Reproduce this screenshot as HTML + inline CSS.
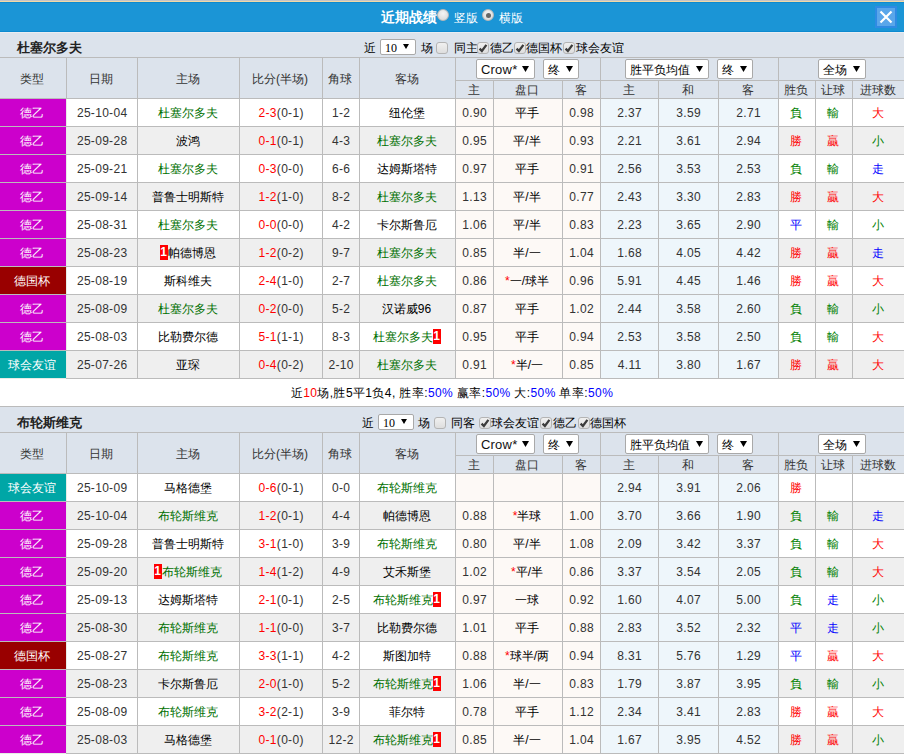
<!DOCTYPE html>
<html><head><meta charset="utf-8"><style>
html,body{margin:0;padding:0;background:#fff;width:904px;height:755px;overflow:hidden;position:relative}
body{font-family:"Liberation Sans",sans-serif;font-size:12px;color:#222}
body>div{position:absolute;box-sizing:border-box}
svg{display:block}
.c{text-align:center;white-space:nowrap;overflow:hidden}
.t{white-space:nowrap;line-height:12px}
.hd{color:#333}
.ttl{font-weight:bold;font-size:13px;color:#333}
.title{color:#fff;font-size:12px;white-space:nowrap}
.title b{font-size:14px}
.rd{display:inline-block;width:12px;height:12px;border-radius:50%;background:linear-gradient(#f4f4f4,#d8d8d8);border:1px solid #b8b8b8;box-sizing:border-box;vertical-align:6px;position:relative}
.rd.on::after{content:"";position:absolute;left:2.5px;top:2.5px;width:5px;height:5px;border-radius:50%;background:#555}
.ctrl{height:24px;line-height:24px;white-space:nowrap}
.cb{display:inline-block;width:11px;height:11px;border:1px solid #a8a8a8;border-radius:2px;background:linear-gradient(#f2f2f2,#dcdcdc);box-sizing:border-box;vertical-align:-1px;position:relative}
.cb svg{position:absolute;left:-1px;top:-1px}
.s10{display:inline-block;width:36px;height:16px;line-height:14px;border:1px solid #a9a9a9;border-radius:2px;background:#fff;box-sizing:border-box;vertical-align:-3px;position:relative;padding-left:5px;color:#000;font-family:'Liberation Mono',monospace;font-size:11px}
.arr,.arr2{position:absolute}
.arr2{left:22px;top:4px}
.st{position:absolute;left:5px;top:0;line-height:19px}
.arr{right:6px;top:6px}
.rc{display:inline-block;background:#f00;color:#fff;width:8px;height:15px;line-height:15px;text-align:center;vertical-align:-3px;position:relative;top:-4px;letter-spacing:0;text-indent:0;font-weight:bold}
</style></head><body>
<div style="left:0px;top:0px;width:904px;height:1px;background:#c4c4c8"></div>
<div style="left:0px;top:1px;width:904px;height:1px;background:#f2d9a6"></div>
<div style="left:0px;top:2px;width:904px;height:1px;background:#0d8ad0"></div>
<div style="left:0px;top:3px;width:904px;height:28px;background:#1b95d6"></div>
<div style="left:0px;top:31px;width:904px;height:1px;background:#0d8ad0"></div>
<div style="left:0px;top:32px;width:904px;height:1px;background:#e9edf2"></div>
<div class="t" style="left:381px;top:11px;font-weight:bold;font-size:14px;color:#fff">近期战绩</div>
<div style="left:437px;top:9px;width:12px;height:12px;border-radius:50%;border:1px solid #b9b9b9;background:radial-gradient(circle at 50% 35%,#f4f4f4,#d4d4d4)"></div>
<div class="t" style="left:454px;top:12px;color:#fff">竖版</div>
<div style="left:482px;top:9px;width:12px;height:12px;border-radius:50%;border:1px solid #b9b9b9;background:radial-gradient(circle at 50% 35%,#f4f4f4,#d4d4d4)"><div style="position:absolute;left:2.5px;top:2.5px;width:5px;height:5px;border-radius:50%;background:#666"></div></div>
<div class="t" style="left:499px;top:12px;color:#fff">横版</div>
<div style="left:875px;top:6px;width:22px;height:22px;background:#2f8be3"></div>
<div style="left:877px;top:8px;width:18px;height:18px;background:#5aa6ea"><svg width="18" height="18" viewBox="0 0 18 18"><path d="M3.5 3.5 L14.5 14.5 M14.5 3.5 L3.5 14.5" stroke="#fff" stroke-width="2.2"/></svg></div>
<div style="left:0px;top:33px;width:904px;height:24px;background:#dce3ec"></div>
<div class="t" style="left:17px;top:42px;font-weight:bold;font-size:13px">杜塞尔多夫</div>
<div class="t" style="left:364px;top:42px;color:#000">近</div>
<div style="left:380px;top:39px;width:36px;height:16px;background:#fff;border:1px solid #a9a9a9;border-radius:2px;"></div>
<div class="t" style="left:385px;top:42px;font-family:'Liberation Serif',serif;font-size:12px;line-height:12px;color:#000">10</div>
<div style="left:403px;top:44px;width:6px;height:5px;"><svg width="6" height="5" viewBox="0 0 6 5"><path d="M0 0 H6 L3 5 Z" fill="#000"/></svg></div>
<div class="t" style="left:421px;top:42px;color:#000">场</div>
<div style="left:436px;top:42px;width:12px;height:12px;border:1px solid #b4b4b4;border-radius:3px;background:linear-gradient(#f0f0f0,#dedede)"></div>
<div class="t" style="left:454px;top:42px;color:#000">同主</div>
<div style="left:477px;top:42px;width:12px;height:12px;border:1px solid #b4b4b4;border-radius:3px;background:linear-gradient(#f0f0f0,#dedede)"><svg width="12" height="12" viewBox="0 0 12 12" style="position:absolute;left:-1px;top:-1px"><path d="M2.6 6.6 L4.9 9 L9.4 2.9" stroke="#3c3c3c" stroke-width="2.3" fill="none"/></svg></div>
<div class="t" style="left:490px;top:42px;color:#000">德乙</div>
<div style="left:514px;top:42px;width:12px;height:12px;border:1px solid #b4b4b4;border-radius:3px;background:linear-gradient(#f0f0f0,#dedede)"><svg width="12" height="12" viewBox="0 0 12 12" style="position:absolute;left:-1px;top:-1px"><path d="M2.6 6.6 L4.9 9 L9.4 2.9" stroke="#3c3c3c" stroke-width="2.3" fill="none"/></svg></div>
<div class="t" style="left:526px;top:42px;color:#000">德国杯</div>
<div style="left:563px;top:42px;width:12px;height:12px;border:1px solid #b4b4b4;border-radius:3px;background:linear-gradient(#f0f0f0,#dedede)"><svg width="12" height="12" viewBox="0 0 12 12" style="position:absolute;left:-1px;top:-1px"><path d="M2.6 6.6 L4.9 9 L9.4 2.9" stroke="#3c3c3c" stroke-width="2.3" fill="none"/></svg></div>
<div class="t" style="left:576px;top:42px;color:#000">球会友谊</div>
<div style="left:0px;top:57px;width:904px;height:1px;background:#bbbbbb"></div>
<div style="left:0px;top:58px;width:904px;height:40px;background:#dce3ec"></div>
<div style="left:66px;top:57px;width:1px;height:41px;background:#bbbbbb"></div>
<div style="left:137px;top:57px;width:1px;height:41px;background:#bbbbbb"></div>
<div style="left:239px;top:57px;width:1px;height:41px;background:#bbbbbb"></div>
<div style="left:322px;top:57px;width:1px;height:41px;background:#bbbbbb"></div>
<div style="left:359px;top:57px;width:1px;height:41px;background:#bbbbbb"></div>
<div style="left:455px;top:57px;width:1px;height:41px;background:#bbbbbb"></div>
<div style="left:493px;top:80px;width:1px;height:18px;background:#bbbbbb"></div>
<div style="left:562px;top:80px;width:1px;height:18px;background:#bbbbbb"></div>
<div style="left:600px;top:57px;width:1px;height:41px;background:#bbbbbb"></div>
<div style="left:658px;top:80px;width:1px;height:18px;background:#bbbbbb"></div>
<div style="left:718px;top:80px;width:1px;height:18px;background:#bbbbbb"></div>
<div style="left:778px;top:57px;width:1px;height:41px;background:#bbbbbb"></div>
<div style="left:815px;top:80px;width:1px;height:18px;background:#bbbbbb"></div>
<div style="left:852px;top:80px;width:1px;height:18px;background:#bbbbbb"></div>
<div style="left:455px;top:80px;width:449px;height:1px;background:#bbbbbb"></div>
<div style="left:0px;top:98px;width:904px;height:1px;background:#bbbbbb"></div>
<div class="c" style="left:-1px;top:59px;width:66px;height:40px;line-height:40px;color:#000;color:#333">类型</div>
<div class="c" style="left:66px;top:59px;width:70px;height:40px;line-height:40px;color:#000;color:#333">日期</div>
<div class="c" style="left:137px;top:59px;width:101px;height:40px;line-height:40px;color:#000;color:#333">主场</div>
<div class="c" style="left:239px;top:59px;width:82px;height:40px;line-height:40px;color:#000;color:#333">比分(半场)</div>
<div class="c" style="left:322px;top:59px;width:36px;height:40px;line-height:40px;color:#000;color:#333">角球</div>
<div class="c" style="left:359px;top:59px;width:95px;height:40px;line-height:40px;color:#000;color:#333">客场</div>
<div class="c" style="left:455px;top:82px;width:37px;height:17px;line-height:17px;color:#000;color:#333">主</div>
<div class="c" style="left:493px;top:82px;width:68px;height:17px;line-height:17px;color:#000;color:#333">盘口</div>
<div class="c" style="left:562px;top:82px;width:37px;height:17px;line-height:17px;color:#000;color:#333">客</div>
<div class="c" style="left:600px;top:82px;width:57px;height:17px;line-height:17px;color:#000;color:#333">主</div>
<div class="c" style="left:658px;top:82px;width:59px;height:17px;line-height:17px;color:#000;color:#333">和</div>
<div class="c" style="left:718px;top:82px;width:59px;height:17px;line-height:17px;color:#000;color:#333">客</div>
<div class="c" style="left:778px;top:82px;width:36px;height:17px;line-height:17px;color:#000;color:#333">胜负</div>
<div class="c" style="left:815px;top:82px;width:36px;height:17px;line-height:17px;color:#000;color:#333">让球</div>
<div class="c" style="left:852px;top:82px;width:52px;height:17px;line-height:17px;color:#000;color:#333">进球数</div>
<div style="left:476px;top:59px;width:59px;height:20px;background:#fff;border:1px solid #a9a9a9;border-radius:2px;"></div>
<div class="t" style="left:481px;top:64px;font-size:13px;letter-spacing:0.2px;color:#111">Crow*</div>
<div style="left:522px;top:66px;width:7px;height:6px;"><svg width="7" height="6" viewBox="0 0 7 6"><path d="M0 0 H7 L3.5 6 Z" fill="#000"/></svg></div>
<div style="left:543px;top:59px;width:36px;height:20px;background:#fff;border:1px solid #a9a9a9;border-radius:2px;"></div>
<div class="t" style="left:548px;top:64px;color:#000">终</div>
<div style="left:566px;top:66px;width:7px;height:6px;"><svg width="7" height="6" viewBox="0 0 7 6"><path d="M0 0 H7 L3.5 6 Z" fill="#000"/></svg></div>
<div style="left:625px;top:59px;width:84px;height:20px;background:#fff;border:1px solid #a9a9a9;border-radius:2px;"></div>
<div class="t" style="left:630px;top:64px;color:#000">胜平负均值</div>
<div style="left:696px;top:66px;width:7px;height:6px;"><svg width="7" height="6" viewBox="0 0 7 6"><path d="M0 0 H7 L3.5 6 Z" fill="#000"/></svg></div>
<div style="left:717px;top:59px;width:36px;height:20px;background:#fff;border:1px solid #a9a9a9;border-radius:2px;"></div>
<div class="t" style="left:722px;top:64px;color:#000">终</div>
<div style="left:740px;top:66px;width:7px;height:6px;"><svg width="7" height="6" viewBox="0 0 7 6"><path d="M0 0 H7 L3.5 6 Z" fill="#000"/></svg></div>
<div style="left:818px;top:59px;width:48px;height:20px;background:#fff;border:1px solid #a9a9a9;border-radius:2px;"></div>
<div class="t" style="left:823px;top:64px;color:#000">全场</div>
<div style="left:853px;top:66px;width:7px;height:6px;"><svg width="7" height="6" viewBox="0 0 7 6"><path d="M0 0 H7 L3.5 6 Z" fill="#000"/></svg></div>
<div style="left:0px;top:99px;width:66px;height:27px;background:#cc00cc"></div>
<div class="c" style="left:-1px;top:100px;width:66px;height:27px;line-height:27px;color:#000;color:#fff">德乙</div>
<div style="left:67px;top:99px;width:70px;height:27px;background:#ffffff"></div>
<div class="c" style="left:67px;top:100px;width:70px;height:27px;line-height:27px;letter-spacing:0.3px;text-indent:0.3px;color:#333;">25-10-04</div>
<div style="left:66px;top:99px;width:1px;height:27px;background:#e6ede6"></div>
<div style="left:138px;top:99px;width:101px;height:27px;background:#ffffff"></div>
<div class="c" style="left:137px;top:100px;width:101px;height:27px;line-height:27px;color:#000;"><span style="color:#007000">杜塞尔多夫</span></div>
<div style="left:137px;top:98px;width:1px;height:28px;background:#bbbbbb"></div>
<div style="left:240px;top:99px;width:82px;height:27px;background:#ffffff"></div>
<div class="c" style="left:240px;top:100px;width:82px;height:27px;line-height:27px;letter-spacing:0.3px;text-indent:0.3px;color:#333;"><span style="color:#ff0000">2-3</span>(0-1)</div>
<div style="left:239px;top:98px;width:1px;height:28px;background:#bbbbbb"></div>
<div style="left:323px;top:99px;width:36px;height:27px;background:#ffffff"></div>
<div class="c" style="left:323px;top:100px;width:36px;height:27px;line-height:27px;letter-spacing:0.3px;text-indent:0.3px;color:#333;">1-2</div>
<div style="left:322px;top:98px;width:1px;height:28px;background:#bbbbbb"></div>
<div style="left:360px;top:99px;width:95px;height:27px;background:#ffffff"></div>
<div class="c" style="left:359px;top:100px;width:95px;height:27px;line-height:27px;color:#000;">纽伦堡</div>
<div style="left:359px;top:98px;width:1px;height:28px;background:#bbbbbb"></div>
<div style="left:456px;top:99px;width:37px;height:27px;background:#fdf9f6"></div>
<div class="c" style="left:456px;top:100px;width:37px;height:27px;line-height:27px;letter-spacing:0.3px;text-indent:0.3px;color:#333;">0.90</div>
<div style="left:455px;top:98px;width:1px;height:28px;background:#bbbbbb"></div>
<div style="left:494px;top:99px;width:68px;height:27px;background:#fdf9f6"></div>
<div class="c" style="left:493px;top:100px;width:68px;height:27px;line-height:27px;color:#000;">平手</div>
<div style="left:493px;top:98px;width:1px;height:28px;background:#bbbbbb"></div>
<div style="left:563px;top:99px;width:37px;height:27px;background:#fdf9f6"></div>
<div class="c" style="left:563px;top:100px;width:37px;height:27px;line-height:27px;letter-spacing:0.3px;text-indent:0.3px;color:#333;">0.98</div>
<div style="left:562px;top:98px;width:1px;height:28px;background:#bbbbbb"></div>
<div style="left:601px;top:99px;width:57px;height:27px;background:#eef6fb"></div>
<div class="c" style="left:601px;top:100px;width:57px;height:27px;line-height:27px;letter-spacing:0.3px;text-indent:0.3px;color:#333;">2.37</div>
<div style="left:600px;top:98px;width:1px;height:28px;background:#bbbbbb"></div>
<div style="left:659px;top:99px;width:59px;height:27px;background:#eef6fb"></div>
<div class="c" style="left:659px;top:100px;width:59px;height:27px;line-height:27px;letter-spacing:0.3px;text-indent:0.3px;color:#333;">3.59</div>
<div style="left:658px;top:98px;width:1px;height:28px;background:#bbbbbb"></div>
<div style="left:719px;top:99px;width:59px;height:27px;background:#eef6fb"></div>
<div class="c" style="left:719px;top:100px;width:59px;height:27px;line-height:27px;letter-spacing:0.3px;text-indent:0.3px;color:#333;">2.71</div>
<div style="left:718px;top:98px;width:1px;height:28px;background:#bbbbbb"></div>
<div style="left:779px;top:99px;width:36px;height:27px;background:#ffffff"></div>
<div class="c" style="left:778px;top:100px;width:36px;height:27px;line-height:27px;color:#000;"><span style="color:#008000">負</span></div>
<div style="left:778px;top:98px;width:1px;height:28px;background:#bbbbbb"></div>
<div style="left:816px;top:99px;width:36px;height:27px;background:#ffffff"></div>
<div class="c" style="left:815px;top:100px;width:36px;height:27px;line-height:27px;color:#000;"><span style="color:#008000">輸</span></div>
<div style="left:815px;top:98px;width:1px;height:28px;background:#bbbbbb"></div>
<div style="left:853px;top:99px;width:52px;height:27px;background:#ffffff"></div>
<div class="c" style="left:852px;top:100px;width:52px;height:27px;line-height:27px;color:#000;"><span style="color:#ff0000">大</span></div>
<div style="left:852px;top:98px;width:1px;height:28px;background:#bbbbbb"></div>
<div style="left:0px;top:126px;width:904px;height:1px;background:#bbbbbb"></div>
<div style="left:0px;top:127px;width:66px;height:27px;background:#cc00cc"></div>
<div class="c" style="left:-1px;top:128px;width:66px;height:27px;line-height:27px;color:#000;color:#fff">德乙</div>
<div style="left:67px;top:127px;width:70px;height:27px;background:#efefef"></div>
<div class="c" style="left:67px;top:128px;width:70px;height:27px;line-height:27px;letter-spacing:0.3px;text-indent:0.3px;color:#333;">25-09-28</div>
<div style="left:66px;top:127px;width:1px;height:27px;background:#e6ede6"></div>
<div style="left:138px;top:127px;width:101px;height:27px;background:#efefef"></div>
<div class="c" style="left:137px;top:128px;width:101px;height:27px;line-height:27px;color:#000;">波鸿</div>
<div style="left:137px;top:126px;width:1px;height:28px;background:#bbbbbb"></div>
<div style="left:240px;top:127px;width:82px;height:27px;background:#efefef"></div>
<div class="c" style="left:240px;top:128px;width:82px;height:27px;line-height:27px;letter-spacing:0.3px;text-indent:0.3px;color:#333;"><span style="color:#ff0000">0-1</span>(0-1)</div>
<div style="left:239px;top:126px;width:1px;height:28px;background:#bbbbbb"></div>
<div style="left:323px;top:127px;width:36px;height:27px;background:#efefef"></div>
<div class="c" style="left:323px;top:128px;width:36px;height:27px;line-height:27px;letter-spacing:0.3px;text-indent:0.3px;color:#333;">4-3</div>
<div style="left:322px;top:126px;width:1px;height:28px;background:#bbbbbb"></div>
<div style="left:360px;top:127px;width:95px;height:27px;background:#efefef"></div>
<div class="c" style="left:359px;top:128px;width:95px;height:27px;line-height:27px;color:#000;"><span style="color:#007000">杜塞尔多夫</span></div>
<div style="left:359px;top:126px;width:1px;height:28px;background:#bbbbbb"></div>
<div style="left:456px;top:127px;width:37px;height:27px;background:#fdf9f6"></div>
<div class="c" style="left:456px;top:128px;width:37px;height:27px;line-height:27px;letter-spacing:0.3px;text-indent:0.3px;color:#333;">0.95</div>
<div style="left:455px;top:126px;width:1px;height:28px;background:#bbbbbb"></div>
<div style="left:494px;top:127px;width:68px;height:27px;background:#fdf9f6"></div>
<div class="c" style="left:493px;top:128px;width:68px;height:27px;line-height:27px;color:#000;">平/半</div>
<div style="left:493px;top:126px;width:1px;height:28px;background:#bbbbbb"></div>
<div style="left:563px;top:127px;width:37px;height:27px;background:#fdf9f6"></div>
<div class="c" style="left:563px;top:128px;width:37px;height:27px;line-height:27px;letter-spacing:0.3px;text-indent:0.3px;color:#333;">0.93</div>
<div style="left:562px;top:126px;width:1px;height:28px;background:#bbbbbb"></div>
<div style="left:601px;top:127px;width:57px;height:27px;background:#eef6fb"></div>
<div class="c" style="left:601px;top:128px;width:57px;height:27px;line-height:27px;letter-spacing:0.3px;text-indent:0.3px;color:#333;">2.21</div>
<div style="left:600px;top:126px;width:1px;height:28px;background:#bbbbbb"></div>
<div style="left:659px;top:127px;width:59px;height:27px;background:#eef6fb"></div>
<div class="c" style="left:659px;top:128px;width:59px;height:27px;line-height:27px;letter-spacing:0.3px;text-indent:0.3px;color:#333;">3.61</div>
<div style="left:658px;top:126px;width:1px;height:28px;background:#bbbbbb"></div>
<div style="left:719px;top:127px;width:59px;height:27px;background:#eef6fb"></div>
<div class="c" style="left:719px;top:128px;width:59px;height:27px;line-height:27px;letter-spacing:0.3px;text-indent:0.3px;color:#333;">2.94</div>
<div style="left:718px;top:126px;width:1px;height:28px;background:#bbbbbb"></div>
<div style="left:779px;top:127px;width:36px;height:27px;background:#efefef"></div>
<div class="c" style="left:778px;top:128px;width:36px;height:27px;line-height:27px;color:#000;"><span style="color:#ff0000">勝</span></div>
<div style="left:778px;top:126px;width:1px;height:28px;background:#bbbbbb"></div>
<div style="left:816px;top:127px;width:36px;height:27px;background:#efefef"></div>
<div class="c" style="left:815px;top:128px;width:36px;height:27px;line-height:27px;color:#000;"><span style="color:#ff0000">贏</span></div>
<div style="left:815px;top:126px;width:1px;height:28px;background:#bbbbbb"></div>
<div style="left:853px;top:127px;width:52px;height:27px;background:#efefef"></div>
<div class="c" style="left:852px;top:128px;width:52px;height:27px;line-height:27px;color:#000;"><span style="color:#008000">小</span></div>
<div style="left:852px;top:126px;width:1px;height:28px;background:#bbbbbb"></div>
<div style="left:0px;top:154px;width:904px;height:1px;background:#bbbbbb"></div>
<div style="left:0px;top:155px;width:66px;height:27px;background:#cc00cc"></div>
<div class="c" style="left:-1px;top:156px;width:66px;height:27px;line-height:27px;color:#000;color:#fff">德乙</div>
<div style="left:67px;top:155px;width:70px;height:27px;background:#ffffff"></div>
<div class="c" style="left:67px;top:156px;width:70px;height:27px;line-height:27px;letter-spacing:0.3px;text-indent:0.3px;color:#333;">25-09-21</div>
<div style="left:66px;top:155px;width:1px;height:27px;background:#e6ede6"></div>
<div style="left:138px;top:155px;width:101px;height:27px;background:#ffffff"></div>
<div class="c" style="left:137px;top:156px;width:101px;height:27px;line-height:27px;color:#000;"><span style="color:#007000">杜塞尔多夫</span></div>
<div style="left:137px;top:154px;width:1px;height:28px;background:#bbbbbb"></div>
<div style="left:240px;top:155px;width:82px;height:27px;background:#ffffff"></div>
<div class="c" style="left:240px;top:156px;width:82px;height:27px;line-height:27px;letter-spacing:0.3px;text-indent:0.3px;color:#333;"><span style="color:#ff0000">0-3</span>(0-0)</div>
<div style="left:239px;top:154px;width:1px;height:28px;background:#bbbbbb"></div>
<div style="left:323px;top:155px;width:36px;height:27px;background:#ffffff"></div>
<div class="c" style="left:323px;top:156px;width:36px;height:27px;line-height:27px;letter-spacing:0.3px;text-indent:0.3px;color:#333;">6-6</div>
<div style="left:322px;top:154px;width:1px;height:28px;background:#bbbbbb"></div>
<div style="left:360px;top:155px;width:95px;height:27px;background:#ffffff"></div>
<div class="c" style="left:359px;top:156px;width:95px;height:27px;line-height:27px;color:#000;">达姆斯塔特</div>
<div style="left:359px;top:154px;width:1px;height:28px;background:#bbbbbb"></div>
<div style="left:456px;top:155px;width:37px;height:27px;background:#fdf9f6"></div>
<div class="c" style="left:456px;top:156px;width:37px;height:27px;line-height:27px;letter-spacing:0.3px;text-indent:0.3px;color:#333;">0.97</div>
<div style="left:455px;top:154px;width:1px;height:28px;background:#bbbbbb"></div>
<div style="left:494px;top:155px;width:68px;height:27px;background:#fdf9f6"></div>
<div class="c" style="left:493px;top:156px;width:68px;height:27px;line-height:27px;color:#000;">平手</div>
<div style="left:493px;top:154px;width:1px;height:28px;background:#bbbbbb"></div>
<div style="left:563px;top:155px;width:37px;height:27px;background:#fdf9f6"></div>
<div class="c" style="left:563px;top:156px;width:37px;height:27px;line-height:27px;letter-spacing:0.3px;text-indent:0.3px;color:#333;">0.91</div>
<div style="left:562px;top:154px;width:1px;height:28px;background:#bbbbbb"></div>
<div style="left:601px;top:155px;width:57px;height:27px;background:#eef6fb"></div>
<div class="c" style="left:601px;top:156px;width:57px;height:27px;line-height:27px;letter-spacing:0.3px;text-indent:0.3px;color:#333;">2.56</div>
<div style="left:600px;top:154px;width:1px;height:28px;background:#bbbbbb"></div>
<div style="left:659px;top:155px;width:59px;height:27px;background:#eef6fb"></div>
<div class="c" style="left:659px;top:156px;width:59px;height:27px;line-height:27px;letter-spacing:0.3px;text-indent:0.3px;color:#333;">3.53</div>
<div style="left:658px;top:154px;width:1px;height:28px;background:#bbbbbb"></div>
<div style="left:719px;top:155px;width:59px;height:27px;background:#eef6fb"></div>
<div class="c" style="left:719px;top:156px;width:59px;height:27px;line-height:27px;letter-spacing:0.3px;text-indent:0.3px;color:#333;">2.53</div>
<div style="left:718px;top:154px;width:1px;height:28px;background:#bbbbbb"></div>
<div style="left:779px;top:155px;width:36px;height:27px;background:#ffffff"></div>
<div class="c" style="left:778px;top:156px;width:36px;height:27px;line-height:27px;color:#000;"><span style="color:#008000">負</span></div>
<div style="left:778px;top:154px;width:1px;height:28px;background:#bbbbbb"></div>
<div style="left:816px;top:155px;width:36px;height:27px;background:#ffffff"></div>
<div class="c" style="left:815px;top:156px;width:36px;height:27px;line-height:27px;color:#000;"><span style="color:#008000">輸</span></div>
<div style="left:815px;top:154px;width:1px;height:28px;background:#bbbbbb"></div>
<div style="left:853px;top:155px;width:52px;height:27px;background:#ffffff"></div>
<div class="c" style="left:852px;top:156px;width:52px;height:27px;line-height:27px;color:#000;"><span style="color:#0000ff">走</span></div>
<div style="left:852px;top:154px;width:1px;height:28px;background:#bbbbbb"></div>
<div style="left:0px;top:182px;width:904px;height:1px;background:#bbbbbb"></div>
<div style="left:0px;top:183px;width:66px;height:27px;background:#cc00cc"></div>
<div class="c" style="left:-1px;top:184px;width:66px;height:27px;line-height:27px;color:#000;color:#fff">德乙</div>
<div style="left:67px;top:183px;width:70px;height:27px;background:#efefef"></div>
<div class="c" style="left:67px;top:184px;width:70px;height:27px;line-height:27px;letter-spacing:0.3px;text-indent:0.3px;color:#333;">25-09-14</div>
<div style="left:66px;top:183px;width:1px;height:27px;background:#e6ede6"></div>
<div style="left:138px;top:183px;width:101px;height:27px;background:#efefef"></div>
<div class="c" style="left:137px;top:184px;width:101px;height:27px;line-height:27px;color:#000;">普鲁士明斯特</div>
<div style="left:137px;top:182px;width:1px;height:28px;background:#bbbbbb"></div>
<div style="left:240px;top:183px;width:82px;height:27px;background:#efefef"></div>
<div class="c" style="left:240px;top:184px;width:82px;height:27px;line-height:27px;letter-spacing:0.3px;text-indent:0.3px;color:#333;"><span style="color:#ff0000">1-2</span>(1-0)</div>
<div style="left:239px;top:182px;width:1px;height:28px;background:#bbbbbb"></div>
<div style="left:323px;top:183px;width:36px;height:27px;background:#efefef"></div>
<div class="c" style="left:323px;top:184px;width:36px;height:27px;line-height:27px;letter-spacing:0.3px;text-indent:0.3px;color:#333;">8-2</div>
<div style="left:322px;top:182px;width:1px;height:28px;background:#bbbbbb"></div>
<div style="left:360px;top:183px;width:95px;height:27px;background:#efefef"></div>
<div class="c" style="left:359px;top:184px;width:95px;height:27px;line-height:27px;color:#000;"><span style="color:#007000">杜塞尔多夫</span></div>
<div style="left:359px;top:182px;width:1px;height:28px;background:#bbbbbb"></div>
<div style="left:456px;top:183px;width:37px;height:27px;background:#fdf9f6"></div>
<div class="c" style="left:456px;top:184px;width:37px;height:27px;line-height:27px;letter-spacing:0.3px;text-indent:0.3px;color:#333;">1.13</div>
<div style="left:455px;top:182px;width:1px;height:28px;background:#bbbbbb"></div>
<div style="left:494px;top:183px;width:68px;height:27px;background:#fdf9f6"></div>
<div class="c" style="left:493px;top:184px;width:68px;height:27px;line-height:27px;color:#000;">平/半</div>
<div style="left:493px;top:182px;width:1px;height:28px;background:#bbbbbb"></div>
<div style="left:563px;top:183px;width:37px;height:27px;background:#fdf9f6"></div>
<div class="c" style="left:563px;top:184px;width:37px;height:27px;line-height:27px;letter-spacing:0.3px;text-indent:0.3px;color:#333;">0.77</div>
<div style="left:562px;top:182px;width:1px;height:28px;background:#bbbbbb"></div>
<div style="left:601px;top:183px;width:57px;height:27px;background:#eef6fb"></div>
<div class="c" style="left:601px;top:184px;width:57px;height:27px;line-height:27px;letter-spacing:0.3px;text-indent:0.3px;color:#333;">2.43</div>
<div style="left:600px;top:182px;width:1px;height:28px;background:#bbbbbb"></div>
<div style="left:659px;top:183px;width:59px;height:27px;background:#eef6fb"></div>
<div class="c" style="left:659px;top:184px;width:59px;height:27px;line-height:27px;letter-spacing:0.3px;text-indent:0.3px;color:#333;">3.30</div>
<div style="left:658px;top:182px;width:1px;height:28px;background:#bbbbbb"></div>
<div style="left:719px;top:183px;width:59px;height:27px;background:#eef6fb"></div>
<div class="c" style="left:719px;top:184px;width:59px;height:27px;line-height:27px;letter-spacing:0.3px;text-indent:0.3px;color:#333;">2.83</div>
<div style="left:718px;top:182px;width:1px;height:28px;background:#bbbbbb"></div>
<div style="left:779px;top:183px;width:36px;height:27px;background:#efefef"></div>
<div class="c" style="left:778px;top:184px;width:36px;height:27px;line-height:27px;color:#000;"><span style="color:#ff0000">勝</span></div>
<div style="left:778px;top:182px;width:1px;height:28px;background:#bbbbbb"></div>
<div style="left:816px;top:183px;width:36px;height:27px;background:#efefef"></div>
<div class="c" style="left:815px;top:184px;width:36px;height:27px;line-height:27px;color:#000;"><span style="color:#ff0000">贏</span></div>
<div style="left:815px;top:182px;width:1px;height:28px;background:#bbbbbb"></div>
<div style="left:853px;top:183px;width:52px;height:27px;background:#efefef"></div>
<div class="c" style="left:852px;top:184px;width:52px;height:27px;line-height:27px;color:#000;"><span style="color:#ff0000">大</span></div>
<div style="left:852px;top:182px;width:1px;height:28px;background:#bbbbbb"></div>
<div style="left:0px;top:210px;width:904px;height:1px;background:#bbbbbb"></div>
<div style="left:0px;top:211px;width:66px;height:27px;background:#cc00cc"></div>
<div class="c" style="left:-1px;top:212px;width:66px;height:27px;line-height:27px;color:#000;color:#fff">德乙</div>
<div style="left:67px;top:211px;width:70px;height:27px;background:#ffffff"></div>
<div class="c" style="left:67px;top:212px;width:70px;height:27px;line-height:27px;letter-spacing:0.3px;text-indent:0.3px;color:#333;">25-08-31</div>
<div style="left:66px;top:211px;width:1px;height:27px;background:#e6ede6"></div>
<div style="left:138px;top:211px;width:101px;height:27px;background:#ffffff"></div>
<div class="c" style="left:137px;top:212px;width:101px;height:27px;line-height:27px;color:#000;"><span style="color:#007000">杜塞尔多夫</span></div>
<div style="left:137px;top:210px;width:1px;height:28px;background:#bbbbbb"></div>
<div style="left:240px;top:211px;width:82px;height:27px;background:#ffffff"></div>
<div class="c" style="left:240px;top:212px;width:82px;height:27px;line-height:27px;letter-spacing:0.3px;text-indent:0.3px;color:#333;"><span style="color:#ff0000">0-0</span>(0-0)</div>
<div style="left:239px;top:210px;width:1px;height:28px;background:#bbbbbb"></div>
<div style="left:323px;top:211px;width:36px;height:27px;background:#ffffff"></div>
<div class="c" style="left:323px;top:212px;width:36px;height:27px;line-height:27px;letter-spacing:0.3px;text-indent:0.3px;color:#333;">4-2</div>
<div style="left:322px;top:210px;width:1px;height:28px;background:#bbbbbb"></div>
<div style="left:360px;top:211px;width:95px;height:27px;background:#ffffff"></div>
<div class="c" style="left:359px;top:212px;width:95px;height:27px;line-height:27px;color:#000;">卡尔斯鲁厄</div>
<div style="left:359px;top:210px;width:1px;height:28px;background:#bbbbbb"></div>
<div style="left:456px;top:211px;width:37px;height:27px;background:#fdf9f6"></div>
<div class="c" style="left:456px;top:212px;width:37px;height:27px;line-height:27px;letter-spacing:0.3px;text-indent:0.3px;color:#333;">1.06</div>
<div style="left:455px;top:210px;width:1px;height:28px;background:#bbbbbb"></div>
<div style="left:494px;top:211px;width:68px;height:27px;background:#fdf9f6"></div>
<div class="c" style="left:493px;top:212px;width:68px;height:27px;line-height:27px;color:#000;">平/半</div>
<div style="left:493px;top:210px;width:1px;height:28px;background:#bbbbbb"></div>
<div style="left:563px;top:211px;width:37px;height:27px;background:#fdf9f6"></div>
<div class="c" style="left:563px;top:212px;width:37px;height:27px;line-height:27px;letter-spacing:0.3px;text-indent:0.3px;color:#333;">0.83</div>
<div style="left:562px;top:210px;width:1px;height:28px;background:#bbbbbb"></div>
<div style="left:601px;top:211px;width:57px;height:27px;background:#eef6fb"></div>
<div class="c" style="left:601px;top:212px;width:57px;height:27px;line-height:27px;letter-spacing:0.3px;text-indent:0.3px;color:#333;">2.23</div>
<div style="left:600px;top:210px;width:1px;height:28px;background:#bbbbbb"></div>
<div style="left:659px;top:211px;width:59px;height:27px;background:#eef6fb"></div>
<div class="c" style="left:659px;top:212px;width:59px;height:27px;line-height:27px;letter-spacing:0.3px;text-indent:0.3px;color:#333;">3.65</div>
<div style="left:658px;top:210px;width:1px;height:28px;background:#bbbbbb"></div>
<div style="left:719px;top:211px;width:59px;height:27px;background:#eef6fb"></div>
<div class="c" style="left:719px;top:212px;width:59px;height:27px;line-height:27px;letter-spacing:0.3px;text-indent:0.3px;color:#333;">2.90</div>
<div style="left:718px;top:210px;width:1px;height:28px;background:#bbbbbb"></div>
<div style="left:779px;top:211px;width:36px;height:27px;background:#ffffff"></div>
<div class="c" style="left:778px;top:212px;width:36px;height:27px;line-height:27px;color:#000;"><span style="color:#0000ff">平</span></div>
<div style="left:778px;top:210px;width:1px;height:28px;background:#bbbbbb"></div>
<div style="left:816px;top:211px;width:36px;height:27px;background:#ffffff"></div>
<div class="c" style="left:815px;top:212px;width:36px;height:27px;line-height:27px;color:#000;"><span style="color:#008000">輸</span></div>
<div style="left:815px;top:210px;width:1px;height:28px;background:#bbbbbb"></div>
<div style="left:853px;top:211px;width:52px;height:27px;background:#ffffff"></div>
<div class="c" style="left:852px;top:212px;width:52px;height:27px;line-height:27px;color:#000;"><span style="color:#008000">小</span></div>
<div style="left:852px;top:210px;width:1px;height:28px;background:#bbbbbb"></div>
<div style="left:0px;top:238px;width:904px;height:1px;background:#bbbbbb"></div>
<div style="left:0px;top:239px;width:66px;height:27px;background:#cc00cc"></div>
<div class="c" style="left:-1px;top:240px;width:66px;height:27px;line-height:27px;color:#000;color:#fff">德乙</div>
<div style="left:67px;top:239px;width:70px;height:27px;background:#efefef"></div>
<div class="c" style="left:67px;top:240px;width:70px;height:27px;line-height:27px;letter-spacing:0.3px;text-indent:0.3px;color:#333;">25-08-23</div>
<div style="left:66px;top:239px;width:1px;height:27px;background:#e6ede6"></div>
<div style="left:138px;top:239px;width:101px;height:27px;background:#efefef"></div>
<div class="c" style="left:137px;top:240px;width:101px;height:27px;line-height:27px;color:#000;"><span class="rc">1</span>帕德博恩</div>
<div style="left:137px;top:238px;width:1px;height:28px;background:#bbbbbb"></div>
<div style="left:240px;top:239px;width:82px;height:27px;background:#efefef"></div>
<div class="c" style="left:240px;top:240px;width:82px;height:27px;line-height:27px;letter-spacing:0.3px;text-indent:0.3px;color:#333;"><span style="color:#ff0000">1-2</span>(0-2)</div>
<div style="left:239px;top:238px;width:1px;height:28px;background:#bbbbbb"></div>
<div style="left:323px;top:239px;width:36px;height:27px;background:#efefef"></div>
<div class="c" style="left:323px;top:240px;width:36px;height:27px;line-height:27px;letter-spacing:0.3px;text-indent:0.3px;color:#333;">9-7</div>
<div style="left:322px;top:238px;width:1px;height:28px;background:#bbbbbb"></div>
<div style="left:360px;top:239px;width:95px;height:27px;background:#efefef"></div>
<div class="c" style="left:359px;top:240px;width:95px;height:27px;line-height:27px;color:#000;"><span style="color:#007000">杜塞尔多夫</span></div>
<div style="left:359px;top:238px;width:1px;height:28px;background:#bbbbbb"></div>
<div style="left:456px;top:239px;width:37px;height:27px;background:#fdf9f6"></div>
<div class="c" style="left:456px;top:240px;width:37px;height:27px;line-height:27px;letter-spacing:0.3px;text-indent:0.3px;color:#333;">0.85</div>
<div style="left:455px;top:238px;width:1px;height:28px;background:#bbbbbb"></div>
<div style="left:494px;top:239px;width:68px;height:27px;background:#fdf9f6"></div>
<div class="c" style="left:493px;top:240px;width:68px;height:27px;line-height:27px;color:#000;">半/一</div>
<div style="left:493px;top:238px;width:1px;height:28px;background:#bbbbbb"></div>
<div style="left:563px;top:239px;width:37px;height:27px;background:#fdf9f6"></div>
<div class="c" style="left:563px;top:240px;width:37px;height:27px;line-height:27px;letter-spacing:0.3px;text-indent:0.3px;color:#333;">1.04</div>
<div style="left:562px;top:238px;width:1px;height:28px;background:#bbbbbb"></div>
<div style="left:601px;top:239px;width:57px;height:27px;background:#eef6fb"></div>
<div class="c" style="left:601px;top:240px;width:57px;height:27px;line-height:27px;letter-spacing:0.3px;text-indent:0.3px;color:#333;">1.68</div>
<div style="left:600px;top:238px;width:1px;height:28px;background:#bbbbbb"></div>
<div style="left:659px;top:239px;width:59px;height:27px;background:#eef6fb"></div>
<div class="c" style="left:659px;top:240px;width:59px;height:27px;line-height:27px;letter-spacing:0.3px;text-indent:0.3px;color:#333;">4.05</div>
<div style="left:658px;top:238px;width:1px;height:28px;background:#bbbbbb"></div>
<div style="left:719px;top:239px;width:59px;height:27px;background:#eef6fb"></div>
<div class="c" style="left:719px;top:240px;width:59px;height:27px;line-height:27px;letter-spacing:0.3px;text-indent:0.3px;color:#333;">4.42</div>
<div style="left:718px;top:238px;width:1px;height:28px;background:#bbbbbb"></div>
<div style="left:779px;top:239px;width:36px;height:27px;background:#efefef"></div>
<div class="c" style="left:778px;top:240px;width:36px;height:27px;line-height:27px;color:#000;"><span style="color:#ff0000">勝</span></div>
<div style="left:778px;top:238px;width:1px;height:28px;background:#bbbbbb"></div>
<div style="left:816px;top:239px;width:36px;height:27px;background:#efefef"></div>
<div class="c" style="left:815px;top:240px;width:36px;height:27px;line-height:27px;color:#000;"><span style="color:#ff0000">贏</span></div>
<div style="left:815px;top:238px;width:1px;height:28px;background:#bbbbbb"></div>
<div style="left:853px;top:239px;width:52px;height:27px;background:#efefef"></div>
<div class="c" style="left:852px;top:240px;width:52px;height:27px;line-height:27px;color:#000;"><span style="color:#0000ff">走</span></div>
<div style="left:852px;top:238px;width:1px;height:28px;background:#bbbbbb"></div>
<div style="left:0px;top:266px;width:904px;height:1px;background:#bbbbbb"></div>
<div style="left:0px;top:267px;width:66px;height:27px;background:#990000"></div>
<div class="c" style="left:-1px;top:268px;width:66px;height:27px;line-height:27px;color:#000;color:#fff">德国杯</div>
<div style="left:67px;top:267px;width:70px;height:27px;background:#ffffff"></div>
<div class="c" style="left:67px;top:268px;width:70px;height:27px;line-height:27px;letter-spacing:0.3px;text-indent:0.3px;color:#333;">25-08-19</div>
<div style="left:66px;top:267px;width:1px;height:27px;background:#e6ede6"></div>
<div style="left:138px;top:267px;width:101px;height:27px;background:#ffffff"></div>
<div class="c" style="left:137px;top:268px;width:101px;height:27px;line-height:27px;color:#000;">斯科维夫</div>
<div style="left:137px;top:266px;width:1px;height:28px;background:#bbbbbb"></div>
<div style="left:240px;top:267px;width:82px;height:27px;background:#ffffff"></div>
<div class="c" style="left:240px;top:268px;width:82px;height:27px;line-height:27px;letter-spacing:0.3px;text-indent:0.3px;color:#333;"><span style="color:#ff0000">2-4</span>(1-0)</div>
<div style="left:239px;top:266px;width:1px;height:28px;background:#bbbbbb"></div>
<div style="left:323px;top:267px;width:36px;height:27px;background:#ffffff"></div>
<div class="c" style="left:323px;top:268px;width:36px;height:27px;line-height:27px;letter-spacing:0.3px;text-indent:0.3px;color:#333;">2-7</div>
<div style="left:322px;top:266px;width:1px;height:28px;background:#bbbbbb"></div>
<div style="left:360px;top:267px;width:95px;height:27px;background:#ffffff"></div>
<div class="c" style="left:359px;top:268px;width:95px;height:27px;line-height:27px;color:#000;"><span style="color:#007000">杜塞尔多夫</span></div>
<div style="left:359px;top:266px;width:1px;height:28px;background:#bbbbbb"></div>
<div style="left:456px;top:267px;width:37px;height:27px;background:#fdf9f6"></div>
<div class="c" style="left:456px;top:268px;width:37px;height:27px;line-height:27px;letter-spacing:0.3px;text-indent:0.3px;color:#333;">0.86</div>
<div style="left:455px;top:266px;width:1px;height:28px;background:#bbbbbb"></div>
<div style="left:494px;top:267px;width:68px;height:27px;background:#fdf9f6"></div>
<div class="c" style="left:493px;top:268px;width:68px;height:27px;line-height:27px;color:#000;"><span style="color:#ff0000">*</span>一/球半</div>
<div style="left:493px;top:266px;width:1px;height:28px;background:#bbbbbb"></div>
<div style="left:563px;top:267px;width:37px;height:27px;background:#fdf9f6"></div>
<div class="c" style="left:563px;top:268px;width:37px;height:27px;line-height:27px;letter-spacing:0.3px;text-indent:0.3px;color:#333;">0.96</div>
<div style="left:562px;top:266px;width:1px;height:28px;background:#bbbbbb"></div>
<div style="left:601px;top:267px;width:57px;height:27px;background:#eef6fb"></div>
<div class="c" style="left:601px;top:268px;width:57px;height:27px;line-height:27px;letter-spacing:0.3px;text-indent:0.3px;color:#333;">5.91</div>
<div style="left:600px;top:266px;width:1px;height:28px;background:#bbbbbb"></div>
<div style="left:659px;top:267px;width:59px;height:27px;background:#eef6fb"></div>
<div class="c" style="left:659px;top:268px;width:59px;height:27px;line-height:27px;letter-spacing:0.3px;text-indent:0.3px;color:#333;">4.45</div>
<div style="left:658px;top:266px;width:1px;height:28px;background:#bbbbbb"></div>
<div style="left:719px;top:267px;width:59px;height:27px;background:#eef6fb"></div>
<div class="c" style="left:719px;top:268px;width:59px;height:27px;line-height:27px;letter-spacing:0.3px;text-indent:0.3px;color:#333;">1.46</div>
<div style="left:718px;top:266px;width:1px;height:28px;background:#bbbbbb"></div>
<div style="left:779px;top:267px;width:36px;height:27px;background:#ffffff"></div>
<div class="c" style="left:778px;top:268px;width:36px;height:27px;line-height:27px;color:#000;"><span style="color:#ff0000">勝</span></div>
<div style="left:778px;top:266px;width:1px;height:28px;background:#bbbbbb"></div>
<div style="left:816px;top:267px;width:36px;height:27px;background:#ffffff"></div>
<div class="c" style="left:815px;top:268px;width:36px;height:27px;line-height:27px;color:#000;"><span style="color:#ff0000">贏</span></div>
<div style="left:815px;top:266px;width:1px;height:28px;background:#bbbbbb"></div>
<div style="left:853px;top:267px;width:52px;height:27px;background:#ffffff"></div>
<div class="c" style="left:852px;top:268px;width:52px;height:27px;line-height:27px;color:#000;"><span style="color:#ff0000">大</span></div>
<div style="left:852px;top:266px;width:1px;height:28px;background:#bbbbbb"></div>
<div style="left:0px;top:294px;width:904px;height:1px;background:#bbbbbb"></div>
<div style="left:0px;top:295px;width:66px;height:27px;background:#cc00cc"></div>
<div class="c" style="left:-1px;top:296px;width:66px;height:27px;line-height:27px;color:#000;color:#fff">德乙</div>
<div style="left:67px;top:295px;width:70px;height:27px;background:#efefef"></div>
<div class="c" style="left:67px;top:296px;width:70px;height:27px;line-height:27px;letter-spacing:0.3px;text-indent:0.3px;color:#333;">25-08-09</div>
<div style="left:66px;top:295px;width:1px;height:27px;background:#e6ede6"></div>
<div style="left:138px;top:295px;width:101px;height:27px;background:#efefef"></div>
<div class="c" style="left:137px;top:296px;width:101px;height:27px;line-height:27px;color:#000;"><span style="color:#007000">杜塞尔多夫</span></div>
<div style="left:137px;top:294px;width:1px;height:28px;background:#bbbbbb"></div>
<div style="left:240px;top:295px;width:82px;height:27px;background:#efefef"></div>
<div class="c" style="left:240px;top:296px;width:82px;height:27px;line-height:27px;letter-spacing:0.3px;text-indent:0.3px;color:#333;"><span style="color:#ff0000">0-2</span>(0-0)</div>
<div style="left:239px;top:294px;width:1px;height:28px;background:#bbbbbb"></div>
<div style="left:323px;top:295px;width:36px;height:27px;background:#efefef"></div>
<div class="c" style="left:323px;top:296px;width:36px;height:27px;line-height:27px;letter-spacing:0.3px;text-indent:0.3px;color:#333;">5-2</div>
<div style="left:322px;top:294px;width:1px;height:28px;background:#bbbbbb"></div>
<div style="left:360px;top:295px;width:95px;height:27px;background:#efefef"></div>
<div class="c" style="left:359px;top:296px;width:95px;height:27px;line-height:27px;color:#000;">汉诺威96</div>
<div style="left:359px;top:294px;width:1px;height:28px;background:#bbbbbb"></div>
<div style="left:456px;top:295px;width:37px;height:27px;background:#fdf9f6"></div>
<div class="c" style="left:456px;top:296px;width:37px;height:27px;line-height:27px;letter-spacing:0.3px;text-indent:0.3px;color:#333;">0.87</div>
<div style="left:455px;top:294px;width:1px;height:28px;background:#bbbbbb"></div>
<div style="left:494px;top:295px;width:68px;height:27px;background:#fdf9f6"></div>
<div class="c" style="left:493px;top:296px;width:68px;height:27px;line-height:27px;color:#000;">平手</div>
<div style="left:493px;top:294px;width:1px;height:28px;background:#bbbbbb"></div>
<div style="left:563px;top:295px;width:37px;height:27px;background:#fdf9f6"></div>
<div class="c" style="left:563px;top:296px;width:37px;height:27px;line-height:27px;letter-spacing:0.3px;text-indent:0.3px;color:#333;">1.02</div>
<div style="left:562px;top:294px;width:1px;height:28px;background:#bbbbbb"></div>
<div style="left:601px;top:295px;width:57px;height:27px;background:#eef6fb"></div>
<div class="c" style="left:601px;top:296px;width:57px;height:27px;line-height:27px;letter-spacing:0.3px;text-indent:0.3px;color:#333;">2.44</div>
<div style="left:600px;top:294px;width:1px;height:28px;background:#bbbbbb"></div>
<div style="left:659px;top:295px;width:59px;height:27px;background:#eef6fb"></div>
<div class="c" style="left:659px;top:296px;width:59px;height:27px;line-height:27px;letter-spacing:0.3px;text-indent:0.3px;color:#333;">3.58</div>
<div style="left:658px;top:294px;width:1px;height:28px;background:#bbbbbb"></div>
<div style="left:719px;top:295px;width:59px;height:27px;background:#eef6fb"></div>
<div class="c" style="left:719px;top:296px;width:59px;height:27px;line-height:27px;letter-spacing:0.3px;text-indent:0.3px;color:#333;">2.60</div>
<div style="left:718px;top:294px;width:1px;height:28px;background:#bbbbbb"></div>
<div style="left:779px;top:295px;width:36px;height:27px;background:#efefef"></div>
<div class="c" style="left:778px;top:296px;width:36px;height:27px;line-height:27px;color:#000;"><span style="color:#008000">負</span></div>
<div style="left:778px;top:294px;width:1px;height:28px;background:#bbbbbb"></div>
<div style="left:816px;top:295px;width:36px;height:27px;background:#efefef"></div>
<div class="c" style="left:815px;top:296px;width:36px;height:27px;line-height:27px;color:#000;"><span style="color:#008000">輸</span></div>
<div style="left:815px;top:294px;width:1px;height:28px;background:#bbbbbb"></div>
<div style="left:853px;top:295px;width:52px;height:27px;background:#efefef"></div>
<div class="c" style="left:852px;top:296px;width:52px;height:27px;line-height:27px;color:#000;"><span style="color:#008000">小</span></div>
<div style="left:852px;top:294px;width:1px;height:28px;background:#bbbbbb"></div>
<div style="left:0px;top:322px;width:904px;height:1px;background:#bbbbbb"></div>
<div style="left:0px;top:323px;width:66px;height:27px;background:#cc00cc"></div>
<div class="c" style="left:-1px;top:324px;width:66px;height:27px;line-height:27px;color:#000;color:#fff">德乙</div>
<div style="left:67px;top:323px;width:70px;height:27px;background:#ffffff"></div>
<div class="c" style="left:67px;top:324px;width:70px;height:27px;line-height:27px;letter-spacing:0.3px;text-indent:0.3px;color:#333;">25-08-03</div>
<div style="left:66px;top:323px;width:1px;height:27px;background:#e6ede6"></div>
<div style="left:138px;top:323px;width:101px;height:27px;background:#ffffff"></div>
<div class="c" style="left:137px;top:324px;width:101px;height:27px;line-height:27px;color:#000;">比勒费尔德</div>
<div style="left:137px;top:322px;width:1px;height:28px;background:#bbbbbb"></div>
<div style="left:240px;top:323px;width:82px;height:27px;background:#ffffff"></div>
<div class="c" style="left:240px;top:324px;width:82px;height:27px;line-height:27px;letter-spacing:0.3px;text-indent:0.3px;color:#333;"><span style="color:#ff0000">5-1</span>(1-1)</div>
<div style="left:239px;top:322px;width:1px;height:28px;background:#bbbbbb"></div>
<div style="left:323px;top:323px;width:36px;height:27px;background:#ffffff"></div>
<div class="c" style="left:323px;top:324px;width:36px;height:27px;line-height:27px;letter-spacing:0.3px;text-indent:0.3px;color:#333;">8-3</div>
<div style="left:322px;top:322px;width:1px;height:28px;background:#bbbbbb"></div>
<div style="left:360px;top:323px;width:95px;height:27px;background:#ffffff"></div>
<div class="c" style="left:359px;top:324px;width:95px;height:27px;line-height:27px;color:#000;"><span style="color:#007000">杜塞尔多夫</span><span class="rc">1</span></div>
<div style="left:359px;top:322px;width:1px;height:28px;background:#bbbbbb"></div>
<div style="left:456px;top:323px;width:37px;height:27px;background:#fdf9f6"></div>
<div class="c" style="left:456px;top:324px;width:37px;height:27px;line-height:27px;letter-spacing:0.3px;text-indent:0.3px;color:#333;">0.95</div>
<div style="left:455px;top:322px;width:1px;height:28px;background:#bbbbbb"></div>
<div style="left:494px;top:323px;width:68px;height:27px;background:#fdf9f6"></div>
<div class="c" style="left:493px;top:324px;width:68px;height:27px;line-height:27px;color:#000;">平手</div>
<div style="left:493px;top:322px;width:1px;height:28px;background:#bbbbbb"></div>
<div style="left:563px;top:323px;width:37px;height:27px;background:#fdf9f6"></div>
<div class="c" style="left:563px;top:324px;width:37px;height:27px;line-height:27px;letter-spacing:0.3px;text-indent:0.3px;color:#333;">0.94</div>
<div style="left:562px;top:322px;width:1px;height:28px;background:#bbbbbb"></div>
<div style="left:601px;top:323px;width:57px;height:27px;background:#eef6fb"></div>
<div class="c" style="left:601px;top:324px;width:57px;height:27px;line-height:27px;letter-spacing:0.3px;text-indent:0.3px;color:#333;">2.53</div>
<div style="left:600px;top:322px;width:1px;height:28px;background:#bbbbbb"></div>
<div style="left:659px;top:323px;width:59px;height:27px;background:#eef6fb"></div>
<div class="c" style="left:659px;top:324px;width:59px;height:27px;line-height:27px;letter-spacing:0.3px;text-indent:0.3px;color:#333;">3.58</div>
<div style="left:658px;top:322px;width:1px;height:28px;background:#bbbbbb"></div>
<div style="left:719px;top:323px;width:59px;height:27px;background:#eef6fb"></div>
<div class="c" style="left:719px;top:324px;width:59px;height:27px;line-height:27px;letter-spacing:0.3px;text-indent:0.3px;color:#333;">2.50</div>
<div style="left:718px;top:322px;width:1px;height:28px;background:#bbbbbb"></div>
<div style="left:779px;top:323px;width:36px;height:27px;background:#ffffff"></div>
<div class="c" style="left:778px;top:324px;width:36px;height:27px;line-height:27px;color:#000;"><span style="color:#008000">負</span></div>
<div style="left:778px;top:322px;width:1px;height:28px;background:#bbbbbb"></div>
<div style="left:816px;top:323px;width:36px;height:27px;background:#ffffff"></div>
<div class="c" style="left:815px;top:324px;width:36px;height:27px;line-height:27px;color:#000;"><span style="color:#008000">輸</span></div>
<div style="left:815px;top:322px;width:1px;height:28px;background:#bbbbbb"></div>
<div style="left:853px;top:323px;width:52px;height:27px;background:#ffffff"></div>
<div class="c" style="left:852px;top:324px;width:52px;height:27px;line-height:27px;color:#000;"><span style="color:#ff0000">大</span></div>
<div style="left:852px;top:322px;width:1px;height:28px;background:#bbbbbb"></div>
<div style="left:0px;top:350px;width:904px;height:1px;background:#bbbbbb"></div>
<div style="left:0px;top:351px;width:66px;height:27px;background:#00a6a6"></div>
<div class="c" style="left:-1px;top:352px;width:66px;height:27px;line-height:27px;color:#000;color:#fff">球会友谊</div>
<div style="left:67px;top:351px;width:70px;height:27px;background:#efefef"></div>
<div class="c" style="left:67px;top:352px;width:70px;height:27px;line-height:27px;letter-spacing:0.3px;text-indent:0.3px;color:#333;">25-07-26</div>
<div style="left:66px;top:351px;width:1px;height:27px;background:#e6ede6"></div>
<div style="left:138px;top:351px;width:101px;height:27px;background:#efefef"></div>
<div class="c" style="left:137px;top:352px;width:101px;height:27px;line-height:27px;color:#000;">亚琛</div>
<div style="left:137px;top:350px;width:1px;height:28px;background:#bbbbbb"></div>
<div style="left:240px;top:351px;width:82px;height:27px;background:#efefef"></div>
<div class="c" style="left:240px;top:352px;width:82px;height:27px;line-height:27px;letter-spacing:0.3px;text-indent:0.3px;color:#333;"><span style="color:#ff0000">0-4</span>(0-2)</div>
<div style="left:239px;top:350px;width:1px;height:28px;background:#bbbbbb"></div>
<div style="left:323px;top:351px;width:36px;height:27px;background:#efefef"></div>
<div class="c" style="left:323px;top:352px;width:36px;height:27px;line-height:27px;letter-spacing:0.3px;text-indent:0.3px;color:#333;">2-10</div>
<div style="left:322px;top:350px;width:1px;height:28px;background:#bbbbbb"></div>
<div style="left:360px;top:351px;width:95px;height:27px;background:#efefef"></div>
<div class="c" style="left:359px;top:352px;width:95px;height:27px;line-height:27px;color:#000;"><span style="color:#007000">杜塞尔多夫</span></div>
<div style="left:359px;top:350px;width:1px;height:28px;background:#bbbbbb"></div>
<div style="left:456px;top:351px;width:37px;height:27px;background:#fdf9f6"></div>
<div class="c" style="left:456px;top:352px;width:37px;height:27px;line-height:27px;letter-spacing:0.3px;text-indent:0.3px;color:#333;">0.91</div>
<div style="left:455px;top:350px;width:1px;height:28px;background:#bbbbbb"></div>
<div style="left:494px;top:351px;width:68px;height:27px;background:#fdf9f6"></div>
<div class="c" style="left:493px;top:352px;width:68px;height:27px;line-height:27px;color:#000;"><span style="color:#ff0000">*</span>半/一</div>
<div style="left:493px;top:350px;width:1px;height:28px;background:#bbbbbb"></div>
<div style="left:563px;top:351px;width:37px;height:27px;background:#fdf9f6"></div>
<div class="c" style="left:563px;top:352px;width:37px;height:27px;line-height:27px;letter-spacing:0.3px;text-indent:0.3px;color:#333;">0.85</div>
<div style="left:562px;top:350px;width:1px;height:28px;background:#bbbbbb"></div>
<div style="left:601px;top:351px;width:57px;height:27px;background:#eef6fb"></div>
<div class="c" style="left:601px;top:352px;width:57px;height:27px;line-height:27px;letter-spacing:0.3px;text-indent:0.3px;color:#333;">4.11</div>
<div style="left:600px;top:350px;width:1px;height:28px;background:#bbbbbb"></div>
<div style="left:659px;top:351px;width:59px;height:27px;background:#eef6fb"></div>
<div class="c" style="left:659px;top:352px;width:59px;height:27px;line-height:27px;letter-spacing:0.3px;text-indent:0.3px;color:#333;">3.80</div>
<div style="left:658px;top:350px;width:1px;height:28px;background:#bbbbbb"></div>
<div style="left:719px;top:351px;width:59px;height:27px;background:#eef6fb"></div>
<div class="c" style="left:719px;top:352px;width:59px;height:27px;line-height:27px;letter-spacing:0.3px;text-indent:0.3px;color:#333;">1.67</div>
<div style="left:718px;top:350px;width:1px;height:28px;background:#bbbbbb"></div>
<div style="left:779px;top:351px;width:36px;height:27px;background:#efefef"></div>
<div class="c" style="left:778px;top:352px;width:36px;height:27px;line-height:27px;color:#000;"><span style="color:#ff0000">勝</span></div>
<div style="left:778px;top:350px;width:1px;height:28px;background:#bbbbbb"></div>
<div style="left:816px;top:351px;width:36px;height:27px;background:#efefef"></div>
<div class="c" style="left:815px;top:352px;width:36px;height:27px;line-height:27px;color:#000;"><span style="color:#ff0000">贏</span></div>
<div style="left:815px;top:350px;width:1px;height:28px;background:#bbbbbb"></div>
<div style="left:853px;top:351px;width:52px;height:27px;background:#efefef"></div>
<div class="c" style="left:852px;top:352px;width:52px;height:27px;line-height:27px;color:#000;"><span style="color:#ff0000">大</span></div>
<div style="left:852px;top:350px;width:1px;height:28px;background:#bbbbbb"></div>
<div style="left:0px;top:378px;width:904px;height:1px;background:#bbbbbb"></div>
<div style="left:0px;top:378px;width:66px;height:1px;background:#e6ede6"></div>
<div style="left:0px;top:379px;width:904px;height:27px;background:#fff"></div>
<div class="c" style="left:0;top:380px;width:904px;height:27px;line-height:27px;letter-spacing:0.4px;color:#000">近<span style="color:#ff0000">10</span>场,胜5平1负4, 胜率:<span style="color:#0000ff">50%</span> 赢率:<span style="color:#0000ff">50%</span> 大:<span style="color:#0000ff">50%</span> 单率:<span style="color:#0000ff">50%</span></div>
<div style="left:0px;top:408px;width:904px;height:24px;background:#dce3ec"></div>
<div class="t" style="left:17px;top:417px;font-weight:bold;font-size:13px">布轮斯维克</div>
<div class="t" style="left:362px;top:417px;color:#000">近</div>
<div style="left:378px;top:414px;width:36px;height:16px;background:#fff;border:1px solid #a9a9a9;border-radius:2px;"></div>
<div class="t" style="left:383px;top:417px;font-family:'Liberation Serif',serif;font-size:12px;line-height:12px;color:#000">10</div>
<div style="left:401px;top:419px;width:6px;height:5px;"><svg width="6" height="5" viewBox="0 0 6 5"><path d="M0 0 H6 L3 5 Z" fill="#000"/></svg></div>
<div class="t" style="left:418px;top:417px;color:#000">场</div>
<div style="left:434px;top:417px;width:12px;height:12px;border:1px solid #b4b4b4;border-radius:3px;background:linear-gradient(#f0f0f0,#dedede)"></div>
<div class="t" style="left:451px;top:417px;color:#000">同客</div>
<div style="left:479px;top:417px;width:12px;height:12px;border:1px solid #b4b4b4;border-radius:3px;background:linear-gradient(#f0f0f0,#dedede)"><svg width="12" height="12" viewBox="0 0 12 12" style="position:absolute;left:-1px;top:-1px"><path d="M2.6 6.6 L4.9 9 L9.4 2.9" stroke="#3c3c3c" stroke-width="2.3" fill="none"/></svg></div>
<div class="t" style="left:491px;top:417px;color:#000">球会友谊</div>
<div style="left:540px;top:417px;width:12px;height:12px;border:1px solid #b4b4b4;border-radius:3px;background:linear-gradient(#f0f0f0,#dedede)"><svg width="12" height="12" viewBox="0 0 12 12" style="position:absolute;left:-1px;top:-1px"><path d="M2.6 6.6 L4.9 9 L9.4 2.9" stroke="#3c3c3c" stroke-width="2.3" fill="none"/></svg></div>
<div class="t" style="left:553px;top:417px;color:#000">德乙</div>
<div style="left:578px;top:417px;width:12px;height:12px;border:1px solid #b4b4b4;border-radius:3px;background:linear-gradient(#f0f0f0,#dedede)"><svg width="12" height="12" viewBox="0 0 12 12" style="position:absolute;left:-1px;top:-1px"><path d="M2.6 6.6 L4.9 9 L9.4 2.9" stroke="#3c3c3c" stroke-width="2.3" fill="none"/></svg></div>
<div class="t" style="left:590px;top:417px;color:#000">德国杯</div>
<div style="left:0px;top:432px;width:904px;height:1px;background:#bbbbbb"></div>
<div style="left:0px;top:433px;width:904px;height:40px;background:#dce3ec"></div>
<div style="left:66px;top:432px;width:1px;height:41px;background:#bbbbbb"></div>
<div style="left:137px;top:432px;width:1px;height:41px;background:#bbbbbb"></div>
<div style="left:239px;top:432px;width:1px;height:41px;background:#bbbbbb"></div>
<div style="left:322px;top:432px;width:1px;height:41px;background:#bbbbbb"></div>
<div style="left:359px;top:432px;width:1px;height:41px;background:#bbbbbb"></div>
<div style="left:455px;top:432px;width:1px;height:41px;background:#bbbbbb"></div>
<div style="left:493px;top:455px;width:1px;height:18px;background:#bbbbbb"></div>
<div style="left:562px;top:455px;width:1px;height:18px;background:#bbbbbb"></div>
<div style="left:600px;top:432px;width:1px;height:41px;background:#bbbbbb"></div>
<div style="left:658px;top:455px;width:1px;height:18px;background:#bbbbbb"></div>
<div style="left:718px;top:455px;width:1px;height:18px;background:#bbbbbb"></div>
<div style="left:778px;top:432px;width:1px;height:41px;background:#bbbbbb"></div>
<div style="left:815px;top:455px;width:1px;height:18px;background:#bbbbbb"></div>
<div style="left:852px;top:455px;width:1px;height:18px;background:#bbbbbb"></div>
<div style="left:455px;top:455px;width:449px;height:1px;background:#bbbbbb"></div>
<div style="left:0px;top:473px;width:904px;height:1px;background:#bbbbbb"></div>
<div class="c" style="left:-1px;top:434px;width:66px;height:40px;line-height:40px;color:#000;color:#333">类型</div>
<div class="c" style="left:66px;top:434px;width:70px;height:40px;line-height:40px;color:#000;color:#333">日期</div>
<div class="c" style="left:137px;top:434px;width:101px;height:40px;line-height:40px;color:#000;color:#333">主场</div>
<div class="c" style="left:239px;top:434px;width:82px;height:40px;line-height:40px;color:#000;color:#333">比分(半场)</div>
<div class="c" style="left:322px;top:434px;width:36px;height:40px;line-height:40px;color:#000;color:#333">角球</div>
<div class="c" style="left:359px;top:434px;width:95px;height:40px;line-height:40px;color:#000;color:#333">客场</div>
<div class="c" style="left:455px;top:457px;width:37px;height:17px;line-height:17px;color:#000;color:#333">主</div>
<div class="c" style="left:493px;top:457px;width:68px;height:17px;line-height:17px;color:#000;color:#333">盘口</div>
<div class="c" style="left:562px;top:457px;width:37px;height:17px;line-height:17px;color:#000;color:#333">客</div>
<div class="c" style="left:600px;top:457px;width:57px;height:17px;line-height:17px;color:#000;color:#333">主</div>
<div class="c" style="left:658px;top:457px;width:59px;height:17px;line-height:17px;color:#000;color:#333">和</div>
<div class="c" style="left:718px;top:457px;width:59px;height:17px;line-height:17px;color:#000;color:#333">客</div>
<div class="c" style="left:778px;top:457px;width:36px;height:17px;line-height:17px;color:#000;color:#333">胜负</div>
<div class="c" style="left:815px;top:457px;width:36px;height:17px;line-height:17px;color:#000;color:#333">让球</div>
<div class="c" style="left:852px;top:457px;width:52px;height:17px;line-height:17px;color:#000;color:#333">进球数</div>
<div style="left:476px;top:434px;width:59px;height:20px;background:#fff;border:1px solid #a9a9a9;border-radius:2px;"></div>
<div class="t" style="left:481px;top:439px;font-size:13px;letter-spacing:0.2px;color:#111">Crow*</div>
<div style="left:522px;top:441px;width:7px;height:6px;"><svg width="7" height="6" viewBox="0 0 7 6"><path d="M0 0 H7 L3.5 6 Z" fill="#000"/></svg></div>
<div style="left:543px;top:434px;width:36px;height:20px;background:#fff;border:1px solid #a9a9a9;border-radius:2px;"></div>
<div class="t" style="left:548px;top:439px;color:#000">终</div>
<div style="left:566px;top:441px;width:7px;height:6px;"><svg width="7" height="6" viewBox="0 0 7 6"><path d="M0 0 H7 L3.5 6 Z" fill="#000"/></svg></div>
<div style="left:625px;top:434px;width:84px;height:20px;background:#fff;border:1px solid #a9a9a9;border-radius:2px;"></div>
<div class="t" style="left:630px;top:439px;color:#000">胜平负均值</div>
<div style="left:696px;top:441px;width:7px;height:6px;"><svg width="7" height="6" viewBox="0 0 7 6"><path d="M0 0 H7 L3.5 6 Z" fill="#000"/></svg></div>
<div style="left:717px;top:434px;width:36px;height:20px;background:#fff;border:1px solid #a9a9a9;border-radius:2px;"></div>
<div class="t" style="left:722px;top:439px;color:#000">终</div>
<div style="left:740px;top:441px;width:7px;height:6px;"><svg width="7" height="6" viewBox="0 0 7 6"><path d="M0 0 H7 L3.5 6 Z" fill="#000"/></svg></div>
<div style="left:818px;top:434px;width:48px;height:20px;background:#fff;border:1px solid #a9a9a9;border-radius:2px;"></div>
<div class="t" style="left:823px;top:439px;color:#000">全场</div>
<div style="left:853px;top:441px;width:7px;height:6px;"><svg width="7" height="6" viewBox="0 0 7 6"><path d="M0 0 H7 L3.5 6 Z" fill="#000"/></svg></div>
<div style="left:0px;top:474px;width:66px;height:27px;background:#00a6a6"></div>
<div class="c" style="left:-1px;top:475px;width:66px;height:27px;line-height:27px;color:#000;color:#fff">球会友谊</div>
<div style="left:67px;top:474px;width:70px;height:27px;background:#ffffff"></div>
<div class="c" style="left:67px;top:475px;width:70px;height:27px;line-height:27px;letter-spacing:0.3px;text-indent:0.3px;color:#333;">25-10-09</div>
<div style="left:66px;top:474px;width:1px;height:27px;background:#e6ede6"></div>
<div style="left:138px;top:474px;width:101px;height:27px;background:#ffffff"></div>
<div class="c" style="left:137px;top:475px;width:101px;height:27px;line-height:27px;color:#000;">马格德堡</div>
<div style="left:137px;top:473px;width:1px;height:28px;background:#bbbbbb"></div>
<div style="left:240px;top:474px;width:82px;height:27px;background:#ffffff"></div>
<div class="c" style="left:240px;top:475px;width:82px;height:27px;line-height:27px;letter-spacing:0.3px;text-indent:0.3px;color:#333;"><span style="color:#ff0000">0-6</span>(0-1)</div>
<div style="left:239px;top:473px;width:1px;height:28px;background:#bbbbbb"></div>
<div style="left:323px;top:474px;width:36px;height:27px;background:#ffffff"></div>
<div class="c" style="left:323px;top:475px;width:36px;height:27px;line-height:27px;letter-spacing:0.3px;text-indent:0.3px;color:#333;">0-0</div>
<div style="left:322px;top:473px;width:1px;height:28px;background:#bbbbbb"></div>
<div style="left:360px;top:474px;width:95px;height:27px;background:#ffffff"></div>
<div class="c" style="left:359px;top:475px;width:95px;height:27px;line-height:27px;color:#000;"><span style="color:#007000">布轮斯维克</span></div>
<div style="left:359px;top:473px;width:1px;height:28px;background:#bbbbbb"></div>
<div style="left:456px;top:474px;width:37px;height:27px;background:#fdf9f6"></div>
<div class="c" style="left:456px;top:475px;width:37px;height:27px;line-height:27px;"></div>
<div style="left:455px;top:473px;width:1px;height:28px;background:#bbbbbb"></div>
<div style="left:494px;top:474px;width:68px;height:27px;background:#fdf9f6"></div>
<div class="c" style="left:494px;top:475px;width:68px;height:27px;line-height:27px;"></div>
<div style="left:493px;top:473px;width:1px;height:28px;background:#bbbbbb"></div>
<div style="left:563px;top:474px;width:37px;height:27px;background:#fdf9f6"></div>
<div class="c" style="left:563px;top:475px;width:37px;height:27px;line-height:27px;"></div>
<div style="left:562px;top:473px;width:1px;height:28px;background:#bbbbbb"></div>
<div style="left:601px;top:474px;width:57px;height:27px;background:#eef6fb"></div>
<div class="c" style="left:601px;top:475px;width:57px;height:27px;line-height:27px;letter-spacing:0.3px;text-indent:0.3px;color:#333;">2.94</div>
<div style="left:600px;top:473px;width:1px;height:28px;background:#bbbbbb"></div>
<div style="left:659px;top:474px;width:59px;height:27px;background:#eef6fb"></div>
<div class="c" style="left:659px;top:475px;width:59px;height:27px;line-height:27px;letter-spacing:0.3px;text-indent:0.3px;color:#333;">3.91</div>
<div style="left:658px;top:473px;width:1px;height:28px;background:#bbbbbb"></div>
<div style="left:719px;top:474px;width:59px;height:27px;background:#eef6fb"></div>
<div class="c" style="left:719px;top:475px;width:59px;height:27px;line-height:27px;letter-spacing:0.3px;text-indent:0.3px;color:#333;">2.06</div>
<div style="left:718px;top:473px;width:1px;height:28px;background:#bbbbbb"></div>
<div style="left:779px;top:474px;width:36px;height:27px;background:#ffffff"></div>
<div class="c" style="left:778px;top:475px;width:36px;height:27px;line-height:27px;color:#000;"><span style="color:#ff0000">勝</span></div>
<div style="left:778px;top:473px;width:1px;height:28px;background:#bbbbbb"></div>
<div style="left:816px;top:474px;width:36px;height:27px;background:#ffffff"></div>
<div class="c" style="left:816px;top:475px;width:36px;height:27px;line-height:27px;"></div>
<div style="left:815px;top:473px;width:1px;height:28px;background:#bbbbbb"></div>
<div style="left:853px;top:474px;width:52px;height:27px;background:#ffffff"></div>
<div class="c" style="left:853px;top:475px;width:52px;height:27px;line-height:27px;"></div>
<div style="left:852px;top:473px;width:1px;height:28px;background:#bbbbbb"></div>
<div style="left:0px;top:501px;width:904px;height:1px;background:#bbbbbb"></div>
<div style="left:0px;top:502px;width:66px;height:27px;background:#cc00cc"></div>
<div class="c" style="left:-1px;top:503px;width:66px;height:27px;line-height:27px;color:#000;color:#fff">德乙</div>
<div style="left:67px;top:502px;width:70px;height:27px;background:#efefef"></div>
<div class="c" style="left:67px;top:503px;width:70px;height:27px;line-height:27px;letter-spacing:0.3px;text-indent:0.3px;color:#333;">25-10-04</div>
<div style="left:66px;top:502px;width:1px;height:27px;background:#e6ede6"></div>
<div style="left:138px;top:502px;width:101px;height:27px;background:#efefef"></div>
<div class="c" style="left:137px;top:503px;width:101px;height:27px;line-height:27px;color:#000;"><span style="color:#007000">布轮斯维克</span></div>
<div style="left:137px;top:501px;width:1px;height:28px;background:#bbbbbb"></div>
<div style="left:240px;top:502px;width:82px;height:27px;background:#efefef"></div>
<div class="c" style="left:240px;top:503px;width:82px;height:27px;line-height:27px;letter-spacing:0.3px;text-indent:0.3px;color:#333;"><span style="color:#ff0000">1-2</span>(0-1)</div>
<div style="left:239px;top:501px;width:1px;height:28px;background:#bbbbbb"></div>
<div style="left:323px;top:502px;width:36px;height:27px;background:#efefef"></div>
<div class="c" style="left:323px;top:503px;width:36px;height:27px;line-height:27px;letter-spacing:0.3px;text-indent:0.3px;color:#333;">4-4</div>
<div style="left:322px;top:501px;width:1px;height:28px;background:#bbbbbb"></div>
<div style="left:360px;top:502px;width:95px;height:27px;background:#efefef"></div>
<div class="c" style="left:359px;top:503px;width:95px;height:27px;line-height:27px;color:#000;">帕德博恩</div>
<div style="left:359px;top:501px;width:1px;height:28px;background:#bbbbbb"></div>
<div style="left:456px;top:502px;width:37px;height:27px;background:#fdf9f6"></div>
<div class="c" style="left:456px;top:503px;width:37px;height:27px;line-height:27px;letter-spacing:0.3px;text-indent:0.3px;color:#333;">0.88</div>
<div style="left:455px;top:501px;width:1px;height:28px;background:#bbbbbb"></div>
<div style="left:494px;top:502px;width:68px;height:27px;background:#fdf9f6"></div>
<div class="c" style="left:493px;top:503px;width:68px;height:27px;line-height:27px;color:#000;"><span style="color:#ff0000">*</span>半球</div>
<div style="left:493px;top:501px;width:1px;height:28px;background:#bbbbbb"></div>
<div style="left:563px;top:502px;width:37px;height:27px;background:#fdf9f6"></div>
<div class="c" style="left:563px;top:503px;width:37px;height:27px;line-height:27px;letter-spacing:0.3px;text-indent:0.3px;color:#333;">1.00</div>
<div style="left:562px;top:501px;width:1px;height:28px;background:#bbbbbb"></div>
<div style="left:601px;top:502px;width:57px;height:27px;background:#eef6fb"></div>
<div class="c" style="left:601px;top:503px;width:57px;height:27px;line-height:27px;letter-spacing:0.3px;text-indent:0.3px;color:#333;">3.70</div>
<div style="left:600px;top:501px;width:1px;height:28px;background:#bbbbbb"></div>
<div style="left:659px;top:502px;width:59px;height:27px;background:#eef6fb"></div>
<div class="c" style="left:659px;top:503px;width:59px;height:27px;line-height:27px;letter-spacing:0.3px;text-indent:0.3px;color:#333;">3.66</div>
<div style="left:658px;top:501px;width:1px;height:28px;background:#bbbbbb"></div>
<div style="left:719px;top:502px;width:59px;height:27px;background:#eef6fb"></div>
<div class="c" style="left:719px;top:503px;width:59px;height:27px;line-height:27px;letter-spacing:0.3px;text-indent:0.3px;color:#333;">1.90</div>
<div style="left:718px;top:501px;width:1px;height:28px;background:#bbbbbb"></div>
<div style="left:779px;top:502px;width:36px;height:27px;background:#efefef"></div>
<div class="c" style="left:778px;top:503px;width:36px;height:27px;line-height:27px;color:#000;"><span style="color:#008000">負</span></div>
<div style="left:778px;top:501px;width:1px;height:28px;background:#bbbbbb"></div>
<div style="left:816px;top:502px;width:36px;height:27px;background:#efefef"></div>
<div class="c" style="left:815px;top:503px;width:36px;height:27px;line-height:27px;color:#000;"><span style="color:#008000">輸</span></div>
<div style="left:815px;top:501px;width:1px;height:28px;background:#bbbbbb"></div>
<div style="left:853px;top:502px;width:52px;height:27px;background:#efefef"></div>
<div class="c" style="left:852px;top:503px;width:52px;height:27px;line-height:27px;color:#000;"><span style="color:#0000ff">走</span></div>
<div style="left:852px;top:501px;width:1px;height:28px;background:#bbbbbb"></div>
<div style="left:0px;top:529px;width:904px;height:1px;background:#bbbbbb"></div>
<div style="left:0px;top:530px;width:66px;height:27px;background:#cc00cc"></div>
<div class="c" style="left:-1px;top:531px;width:66px;height:27px;line-height:27px;color:#000;color:#fff">德乙</div>
<div style="left:67px;top:530px;width:70px;height:27px;background:#ffffff"></div>
<div class="c" style="left:67px;top:531px;width:70px;height:27px;line-height:27px;letter-spacing:0.3px;text-indent:0.3px;color:#333;">25-09-28</div>
<div style="left:66px;top:530px;width:1px;height:27px;background:#e6ede6"></div>
<div style="left:138px;top:530px;width:101px;height:27px;background:#ffffff"></div>
<div class="c" style="left:137px;top:531px;width:101px;height:27px;line-height:27px;color:#000;">普鲁士明斯特</div>
<div style="left:137px;top:529px;width:1px;height:28px;background:#bbbbbb"></div>
<div style="left:240px;top:530px;width:82px;height:27px;background:#ffffff"></div>
<div class="c" style="left:240px;top:531px;width:82px;height:27px;line-height:27px;letter-spacing:0.3px;text-indent:0.3px;color:#333;"><span style="color:#ff0000">3-1</span>(1-0)</div>
<div style="left:239px;top:529px;width:1px;height:28px;background:#bbbbbb"></div>
<div style="left:323px;top:530px;width:36px;height:27px;background:#ffffff"></div>
<div class="c" style="left:323px;top:531px;width:36px;height:27px;line-height:27px;letter-spacing:0.3px;text-indent:0.3px;color:#333;">3-9</div>
<div style="left:322px;top:529px;width:1px;height:28px;background:#bbbbbb"></div>
<div style="left:360px;top:530px;width:95px;height:27px;background:#ffffff"></div>
<div class="c" style="left:359px;top:531px;width:95px;height:27px;line-height:27px;color:#000;"><span style="color:#007000">布轮斯维克</span></div>
<div style="left:359px;top:529px;width:1px;height:28px;background:#bbbbbb"></div>
<div style="left:456px;top:530px;width:37px;height:27px;background:#fdf9f6"></div>
<div class="c" style="left:456px;top:531px;width:37px;height:27px;line-height:27px;letter-spacing:0.3px;text-indent:0.3px;color:#333;">0.80</div>
<div style="left:455px;top:529px;width:1px;height:28px;background:#bbbbbb"></div>
<div style="left:494px;top:530px;width:68px;height:27px;background:#fdf9f6"></div>
<div class="c" style="left:493px;top:531px;width:68px;height:27px;line-height:27px;color:#000;">平/半</div>
<div style="left:493px;top:529px;width:1px;height:28px;background:#bbbbbb"></div>
<div style="left:563px;top:530px;width:37px;height:27px;background:#fdf9f6"></div>
<div class="c" style="left:563px;top:531px;width:37px;height:27px;line-height:27px;letter-spacing:0.3px;text-indent:0.3px;color:#333;">1.08</div>
<div style="left:562px;top:529px;width:1px;height:28px;background:#bbbbbb"></div>
<div style="left:601px;top:530px;width:57px;height:27px;background:#eef6fb"></div>
<div class="c" style="left:601px;top:531px;width:57px;height:27px;line-height:27px;letter-spacing:0.3px;text-indent:0.3px;color:#333;">2.09</div>
<div style="left:600px;top:529px;width:1px;height:28px;background:#bbbbbb"></div>
<div style="left:659px;top:530px;width:59px;height:27px;background:#eef6fb"></div>
<div class="c" style="left:659px;top:531px;width:59px;height:27px;line-height:27px;letter-spacing:0.3px;text-indent:0.3px;color:#333;">3.42</div>
<div style="left:658px;top:529px;width:1px;height:28px;background:#bbbbbb"></div>
<div style="left:719px;top:530px;width:59px;height:27px;background:#eef6fb"></div>
<div class="c" style="left:719px;top:531px;width:59px;height:27px;line-height:27px;letter-spacing:0.3px;text-indent:0.3px;color:#333;">3.37</div>
<div style="left:718px;top:529px;width:1px;height:28px;background:#bbbbbb"></div>
<div style="left:779px;top:530px;width:36px;height:27px;background:#ffffff"></div>
<div class="c" style="left:778px;top:531px;width:36px;height:27px;line-height:27px;color:#000;"><span style="color:#008000">負</span></div>
<div style="left:778px;top:529px;width:1px;height:28px;background:#bbbbbb"></div>
<div style="left:816px;top:530px;width:36px;height:27px;background:#ffffff"></div>
<div class="c" style="left:815px;top:531px;width:36px;height:27px;line-height:27px;color:#000;"><span style="color:#008000">輸</span></div>
<div style="left:815px;top:529px;width:1px;height:28px;background:#bbbbbb"></div>
<div style="left:853px;top:530px;width:52px;height:27px;background:#ffffff"></div>
<div class="c" style="left:852px;top:531px;width:52px;height:27px;line-height:27px;color:#000;"><span style="color:#ff0000">大</span></div>
<div style="left:852px;top:529px;width:1px;height:28px;background:#bbbbbb"></div>
<div style="left:0px;top:557px;width:904px;height:1px;background:#bbbbbb"></div>
<div style="left:0px;top:558px;width:66px;height:27px;background:#cc00cc"></div>
<div class="c" style="left:-1px;top:559px;width:66px;height:27px;line-height:27px;color:#000;color:#fff">德乙</div>
<div style="left:67px;top:558px;width:70px;height:27px;background:#efefef"></div>
<div class="c" style="left:67px;top:559px;width:70px;height:27px;line-height:27px;letter-spacing:0.3px;text-indent:0.3px;color:#333;">25-09-20</div>
<div style="left:66px;top:558px;width:1px;height:27px;background:#e6ede6"></div>
<div style="left:138px;top:558px;width:101px;height:27px;background:#efefef"></div>
<div class="c" style="left:137px;top:559px;width:101px;height:27px;line-height:27px;color:#000;"><span class="rc">1</span><span style="color:#007000">布轮斯维克</span></div>
<div style="left:137px;top:557px;width:1px;height:28px;background:#bbbbbb"></div>
<div style="left:240px;top:558px;width:82px;height:27px;background:#efefef"></div>
<div class="c" style="left:240px;top:559px;width:82px;height:27px;line-height:27px;letter-spacing:0.3px;text-indent:0.3px;color:#333;"><span style="color:#ff0000">1-4</span>(1-2)</div>
<div style="left:239px;top:557px;width:1px;height:28px;background:#bbbbbb"></div>
<div style="left:323px;top:558px;width:36px;height:27px;background:#efefef"></div>
<div class="c" style="left:323px;top:559px;width:36px;height:27px;line-height:27px;letter-spacing:0.3px;text-indent:0.3px;color:#333;">4-9</div>
<div style="left:322px;top:557px;width:1px;height:28px;background:#bbbbbb"></div>
<div style="left:360px;top:558px;width:95px;height:27px;background:#efefef"></div>
<div class="c" style="left:359px;top:559px;width:95px;height:27px;line-height:27px;color:#000;">艾禾斯堡</div>
<div style="left:359px;top:557px;width:1px;height:28px;background:#bbbbbb"></div>
<div style="left:456px;top:558px;width:37px;height:27px;background:#fdf9f6"></div>
<div class="c" style="left:456px;top:559px;width:37px;height:27px;line-height:27px;letter-spacing:0.3px;text-indent:0.3px;color:#333;">1.02</div>
<div style="left:455px;top:557px;width:1px;height:28px;background:#bbbbbb"></div>
<div style="left:494px;top:558px;width:68px;height:27px;background:#fdf9f6"></div>
<div class="c" style="left:493px;top:559px;width:68px;height:27px;line-height:27px;color:#000;"><span style="color:#ff0000">*</span>平/半</div>
<div style="left:493px;top:557px;width:1px;height:28px;background:#bbbbbb"></div>
<div style="left:563px;top:558px;width:37px;height:27px;background:#fdf9f6"></div>
<div class="c" style="left:563px;top:559px;width:37px;height:27px;line-height:27px;letter-spacing:0.3px;text-indent:0.3px;color:#333;">0.86</div>
<div style="left:562px;top:557px;width:1px;height:28px;background:#bbbbbb"></div>
<div style="left:601px;top:558px;width:57px;height:27px;background:#eef6fb"></div>
<div class="c" style="left:601px;top:559px;width:57px;height:27px;line-height:27px;letter-spacing:0.3px;text-indent:0.3px;color:#333;">3.37</div>
<div style="left:600px;top:557px;width:1px;height:28px;background:#bbbbbb"></div>
<div style="left:659px;top:558px;width:59px;height:27px;background:#eef6fb"></div>
<div class="c" style="left:659px;top:559px;width:59px;height:27px;line-height:27px;letter-spacing:0.3px;text-indent:0.3px;color:#333;">3.54</div>
<div style="left:658px;top:557px;width:1px;height:28px;background:#bbbbbb"></div>
<div style="left:719px;top:558px;width:59px;height:27px;background:#eef6fb"></div>
<div class="c" style="left:719px;top:559px;width:59px;height:27px;line-height:27px;letter-spacing:0.3px;text-indent:0.3px;color:#333;">2.05</div>
<div style="left:718px;top:557px;width:1px;height:28px;background:#bbbbbb"></div>
<div style="left:779px;top:558px;width:36px;height:27px;background:#efefef"></div>
<div class="c" style="left:778px;top:559px;width:36px;height:27px;line-height:27px;color:#000;"><span style="color:#008000">負</span></div>
<div style="left:778px;top:557px;width:1px;height:28px;background:#bbbbbb"></div>
<div style="left:816px;top:558px;width:36px;height:27px;background:#efefef"></div>
<div class="c" style="left:815px;top:559px;width:36px;height:27px;line-height:27px;color:#000;"><span style="color:#008000">輸</span></div>
<div style="left:815px;top:557px;width:1px;height:28px;background:#bbbbbb"></div>
<div style="left:853px;top:558px;width:52px;height:27px;background:#efefef"></div>
<div class="c" style="left:852px;top:559px;width:52px;height:27px;line-height:27px;color:#000;"><span style="color:#ff0000">大</span></div>
<div style="left:852px;top:557px;width:1px;height:28px;background:#bbbbbb"></div>
<div style="left:0px;top:585px;width:904px;height:1px;background:#bbbbbb"></div>
<div style="left:0px;top:586px;width:66px;height:27px;background:#cc00cc"></div>
<div class="c" style="left:-1px;top:587px;width:66px;height:27px;line-height:27px;color:#000;color:#fff">德乙</div>
<div style="left:67px;top:586px;width:70px;height:27px;background:#ffffff"></div>
<div class="c" style="left:67px;top:587px;width:70px;height:27px;line-height:27px;letter-spacing:0.3px;text-indent:0.3px;color:#333;">25-09-13</div>
<div style="left:66px;top:586px;width:1px;height:27px;background:#e6ede6"></div>
<div style="left:138px;top:586px;width:101px;height:27px;background:#ffffff"></div>
<div class="c" style="left:137px;top:587px;width:101px;height:27px;line-height:27px;color:#000;">达姆斯塔特</div>
<div style="left:137px;top:585px;width:1px;height:28px;background:#bbbbbb"></div>
<div style="left:240px;top:586px;width:82px;height:27px;background:#ffffff"></div>
<div class="c" style="left:240px;top:587px;width:82px;height:27px;line-height:27px;letter-spacing:0.3px;text-indent:0.3px;color:#333;"><span style="color:#ff0000">2-1</span>(0-1)</div>
<div style="left:239px;top:585px;width:1px;height:28px;background:#bbbbbb"></div>
<div style="left:323px;top:586px;width:36px;height:27px;background:#ffffff"></div>
<div class="c" style="left:323px;top:587px;width:36px;height:27px;line-height:27px;letter-spacing:0.3px;text-indent:0.3px;color:#333;">2-5</div>
<div style="left:322px;top:585px;width:1px;height:28px;background:#bbbbbb"></div>
<div style="left:360px;top:586px;width:95px;height:27px;background:#ffffff"></div>
<div class="c" style="left:359px;top:587px;width:95px;height:27px;line-height:27px;color:#000;"><span style="color:#007000">布轮斯维克</span><span class="rc">1</span></div>
<div style="left:359px;top:585px;width:1px;height:28px;background:#bbbbbb"></div>
<div style="left:456px;top:586px;width:37px;height:27px;background:#fdf9f6"></div>
<div class="c" style="left:456px;top:587px;width:37px;height:27px;line-height:27px;letter-spacing:0.3px;text-indent:0.3px;color:#333;">0.97</div>
<div style="left:455px;top:585px;width:1px;height:28px;background:#bbbbbb"></div>
<div style="left:494px;top:586px;width:68px;height:27px;background:#fdf9f6"></div>
<div class="c" style="left:493px;top:587px;width:68px;height:27px;line-height:27px;color:#000;">一球</div>
<div style="left:493px;top:585px;width:1px;height:28px;background:#bbbbbb"></div>
<div style="left:563px;top:586px;width:37px;height:27px;background:#fdf9f6"></div>
<div class="c" style="left:563px;top:587px;width:37px;height:27px;line-height:27px;letter-spacing:0.3px;text-indent:0.3px;color:#333;">0.92</div>
<div style="left:562px;top:585px;width:1px;height:28px;background:#bbbbbb"></div>
<div style="left:601px;top:586px;width:57px;height:27px;background:#eef6fb"></div>
<div class="c" style="left:601px;top:587px;width:57px;height:27px;line-height:27px;letter-spacing:0.3px;text-indent:0.3px;color:#333;">1.60</div>
<div style="left:600px;top:585px;width:1px;height:28px;background:#bbbbbb"></div>
<div style="left:659px;top:586px;width:59px;height:27px;background:#eef6fb"></div>
<div class="c" style="left:659px;top:587px;width:59px;height:27px;line-height:27px;letter-spacing:0.3px;text-indent:0.3px;color:#333;">4.07</div>
<div style="left:658px;top:585px;width:1px;height:28px;background:#bbbbbb"></div>
<div style="left:719px;top:586px;width:59px;height:27px;background:#eef6fb"></div>
<div class="c" style="left:719px;top:587px;width:59px;height:27px;line-height:27px;letter-spacing:0.3px;text-indent:0.3px;color:#333;">5.00</div>
<div style="left:718px;top:585px;width:1px;height:28px;background:#bbbbbb"></div>
<div style="left:779px;top:586px;width:36px;height:27px;background:#ffffff"></div>
<div class="c" style="left:778px;top:587px;width:36px;height:27px;line-height:27px;color:#000;"><span style="color:#008000">負</span></div>
<div style="left:778px;top:585px;width:1px;height:28px;background:#bbbbbb"></div>
<div style="left:816px;top:586px;width:36px;height:27px;background:#ffffff"></div>
<div class="c" style="left:815px;top:587px;width:36px;height:27px;line-height:27px;color:#000;"><span style="color:#0000ff">走</span></div>
<div style="left:815px;top:585px;width:1px;height:28px;background:#bbbbbb"></div>
<div style="left:853px;top:586px;width:52px;height:27px;background:#ffffff"></div>
<div class="c" style="left:852px;top:587px;width:52px;height:27px;line-height:27px;color:#000;"><span style="color:#008000">小</span></div>
<div style="left:852px;top:585px;width:1px;height:28px;background:#bbbbbb"></div>
<div style="left:0px;top:613px;width:904px;height:1px;background:#bbbbbb"></div>
<div style="left:0px;top:614px;width:66px;height:27px;background:#cc00cc"></div>
<div class="c" style="left:-1px;top:615px;width:66px;height:27px;line-height:27px;color:#000;color:#fff">德乙</div>
<div style="left:67px;top:614px;width:70px;height:27px;background:#efefef"></div>
<div class="c" style="left:67px;top:615px;width:70px;height:27px;line-height:27px;letter-spacing:0.3px;text-indent:0.3px;color:#333;">25-08-30</div>
<div style="left:66px;top:614px;width:1px;height:27px;background:#e6ede6"></div>
<div style="left:138px;top:614px;width:101px;height:27px;background:#efefef"></div>
<div class="c" style="left:137px;top:615px;width:101px;height:27px;line-height:27px;color:#000;"><span style="color:#007000">布轮斯维克</span></div>
<div style="left:137px;top:613px;width:1px;height:28px;background:#bbbbbb"></div>
<div style="left:240px;top:614px;width:82px;height:27px;background:#efefef"></div>
<div class="c" style="left:240px;top:615px;width:82px;height:27px;line-height:27px;letter-spacing:0.3px;text-indent:0.3px;color:#333;"><span style="color:#ff0000">1-1</span>(0-0)</div>
<div style="left:239px;top:613px;width:1px;height:28px;background:#bbbbbb"></div>
<div style="left:323px;top:614px;width:36px;height:27px;background:#efefef"></div>
<div class="c" style="left:323px;top:615px;width:36px;height:27px;line-height:27px;letter-spacing:0.3px;text-indent:0.3px;color:#333;">3-7</div>
<div style="left:322px;top:613px;width:1px;height:28px;background:#bbbbbb"></div>
<div style="left:360px;top:614px;width:95px;height:27px;background:#efefef"></div>
<div class="c" style="left:359px;top:615px;width:95px;height:27px;line-height:27px;color:#000;">比勒费尔德</div>
<div style="left:359px;top:613px;width:1px;height:28px;background:#bbbbbb"></div>
<div style="left:456px;top:614px;width:37px;height:27px;background:#fdf9f6"></div>
<div class="c" style="left:456px;top:615px;width:37px;height:27px;line-height:27px;letter-spacing:0.3px;text-indent:0.3px;color:#333;">1.01</div>
<div style="left:455px;top:613px;width:1px;height:28px;background:#bbbbbb"></div>
<div style="left:494px;top:614px;width:68px;height:27px;background:#fdf9f6"></div>
<div class="c" style="left:493px;top:615px;width:68px;height:27px;line-height:27px;color:#000;">平手</div>
<div style="left:493px;top:613px;width:1px;height:28px;background:#bbbbbb"></div>
<div style="left:563px;top:614px;width:37px;height:27px;background:#fdf9f6"></div>
<div class="c" style="left:563px;top:615px;width:37px;height:27px;line-height:27px;letter-spacing:0.3px;text-indent:0.3px;color:#333;">0.88</div>
<div style="left:562px;top:613px;width:1px;height:28px;background:#bbbbbb"></div>
<div style="left:601px;top:614px;width:57px;height:27px;background:#eef6fb"></div>
<div class="c" style="left:601px;top:615px;width:57px;height:27px;line-height:27px;letter-spacing:0.3px;text-indent:0.3px;color:#333;">2.83</div>
<div style="left:600px;top:613px;width:1px;height:28px;background:#bbbbbb"></div>
<div style="left:659px;top:614px;width:59px;height:27px;background:#eef6fb"></div>
<div class="c" style="left:659px;top:615px;width:59px;height:27px;line-height:27px;letter-spacing:0.3px;text-indent:0.3px;color:#333;">3.52</div>
<div style="left:658px;top:613px;width:1px;height:28px;background:#bbbbbb"></div>
<div style="left:719px;top:614px;width:59px;height:27px;background:#eef6fb"></div>
<div class="c" style="left:719px;top:615px;width:59px;height:27px;line-height:27px;letter-spacing:0.3px;text-indent:0.3px;color:#333;">2.32</div>
<div style="left:718px;top:613px;width:1px;height:28px;background:#bbbbbb"></div>
<div style="left:779px;top:614px;width:36px;height:27px;background:#efefef"></div>
<div class="c" style="left:778px;top:615px;width:36px;height:27px;line-height:27px;color:#000;"><span style="color:#0000ff">平</span></div>
<div style="left:778px;top:613px;width:1px;height:28px;background:#bbbbbb"></div>
<div style="left:816px;top:614px;width:36px;height:27px;background:#efefef"></div>
<div class="c" style="left:815px;top:615px;width:36px;height:27px;line-height:27px;color:#000;"><span style="color:#0000ff">走</span></div>
<div style="left:815px;top:613px;width:1px;height:28px;background:#bbbbbb"></div>
<div style="left:853px;top:614px;width:52px;height:27px;background:#efefef"></div>
<div class="c" style="left:852px;top:615px;width:52px;height:27px;line-height:27px;color:#000;"><span style="color:#008000">小</span></div>
<div style="left:852px;top:613px;width:1px;height:28px;background:#bbbbbb"></div>
<div style="left:0px;top:641px;width:904px;height:1px;background:#bbbbbb"></div>
<div style="left:0px;top:642px;width:66px;height:27px;background:#990000"></div>
<div class="c" style="left:-1px;top:643px;width:66px;height:27px;line-height:27px;color:#000;color:#fff">德国杯</div>
<div style="left:67px;top:642px;width:70px;height:27px;background:#ffffff"></div>
<div class="c" style="left:67px;top:643px;width:70px;height:27px;line-height:27px;letter-spacing:0.3px;text-indent:0.3px;color:#333;">25-08-27</div>
<div style="left:66px;top:642px;width:1px;height:27px;background:#e6ede6"></div>
<div style="left:138px;top:642px;width:101px;height:27px;background:#ffffff"></div>
<div class="c" style="left:137px;top:643px;width:101px;height:27px;line-height:27px;color:#000;"><span style="color:#007000">布轮斯维克</span></div>
<div style="left:137px;top:641px;width:1px;height:28px;background:#bbbbbb"></div>
<div style="left:240px;top:642px;width:82px;height:27px;background:#ffffff"></div>
<div class="c" style="left:240px;top:643px;width:82px;height:27px;line-height:27px;letter-spacing:0.3px;text-indent:0.3px;color:#333;"><span style="color:#ff0000">3-3</span>(1-1)</div>
<div style="left:239px;top:641px;width:1px;height:28px;background:#bbbbbb"></div>
<div style="left:323px;top:642px;width:36px;height:27px;background:#ffffff"></div>
<div class="c" style="left:323px;top:643px;width:36px;height:27px;line-height:27px;letter-spacing:0.3px;text-indent:0.3px;color:#333;">4-2</div>
<div style="left:322px;top:641px;width:1px;height:28px;background:#bbbbbb"></div>
<div style="left:360px;top:642px;width:95px;height:27px;background:#ffffff"></div>
<div class="c" style="left:359px;top:643px;width:95px;height:27px;line-height:27px;color:#000;">斯图加特</div>
<div style="left:359px;top:641px;width:1px;height:28px;background:#bbbbbb"></div>
<div style="left:456px;top:642px;width:37px;height:27px;background:#fdf9f6"></div>
<div class="c" style="left:456px;top:643px;width:37px;height:27px;line-height:27px;letter-spacing:0.3px;text-indent:0.3px;color:#333;">0.88</div>
<div style="left:455px;top:641px;width:1px;height:28px;background:#bbbbbb"></div>
<div style="left:494px;top:642px;width:68px;height:27px;background:#fdf9f6"></div>
<div class="c" style="left:493px;top:643px;width:68px;height:27px;line-height:27px;color:#000;"><span style="color:#ff0000">*</span>球半/两</div>
<div style="left:493px;top:641px;width:1px;height:28px;background:#bbbbbb"></div>
<div style="left:563px;top:642px;width:37px;height:27px;background:#fdf9f6"></div>
<div class="c" style="left:563px;top:643px;width:37px;height:27px;line-height:27px;letter-spacing:0.3px;text-indent:0.3px;color:#333;">0.94</div>
<div style="left:562px;top:641px;width:1px;height:28px;background:#bbbbbb"></div>
<div style="left:601px;top:642px;width:57px;height:27px;background:#eef6fb"></div>
<div class="c" style="left:601px;top:643px;width:57px;height:27px;line-height:27px;letter-spacing:0.3px;text-indent:0.3px;color:#333;">8.31</div>
<div style="left:600px;top:641px;width:1px;height:28px;background:#bbbbbb"></div>
<div style="left:659px;top:642px;width:59px;height:27px;background:#eef6fb"></div>
<div class="c" style="left:659px;top:643px;width:59px;height:27px;line-height:27px;letter-spacing:0.3px;text-indent:0.3px;color:#333;">5.76</div>
<div style="left:658px;top:641px;width:1px;height:28px;background:#bbbbbb"></div>
<div style="left:719px;top:642px;width:59px;height:27px;background:#eef6fb"></div>
<div class="c" style="left:719px;top:643px;width:59px;height:27px;line-height:27px;letter-spacing:0.3px;text-indent:0.3px;color:#333;">1.29</div>
<div style="left:718px;top:641px;width:1px;height:28px;background:#bbbbbb"></div>
<div style="left:779px;top:642px;width:36px;height:27px;background:#ffffff"></div>
<div class="c" style="left:778px;top:643px;width:36px;height:27px;line-height:27px;color:#000;"><span style="color:#0000ff">平</span></div>
<div style="left:778px;top:641px;width:1px;height:28px;background:#bbbbbb"></div>
<div style="left:816px;top:642px;width:36px;height:27px;background:#ffffff"></div>
<div class="c" style="left:815px;top:643px;width:36px;height:27px;line-height:27px;color:#000;"><span style="color:#ff0000">贏</span></div>
<div style="left:815px;top:641px;width:1px;height:28px;background:#bbbbbb"></div>
<div style="left:853px;top:642px;width:52px;height:27px;background:#ffffff"></div>
<div class="c" style="left:852px;top:643px;width:52px;height:27px;line-height:27px;color:#000;"><span style="color:#ff0000">大</span></div>
<div style="left:852px;top:641px;width:1px;height:28px;background:#bbbbbb"></div>
<div style="left:0px;top:669px;width:904px;height:1px;background:#bbbbbb"></div>
<div style="left:0px;top:670px;width:66px;height:27px;background:#cc00cc"></div>
<div class="c" style="left:-1px;top:671px;width:66px;height:27px;line-height:27px;color:#000;color:#fff">德乙</div>
<div style="left:67px;top:670px;width:70px;height:27px;background:#efefef"></div>
<div class="c" style="left:67px;top:671px;width:70px;height:27px;line-height:27px;letter-spacing:0.3px;text-indent:0.3px;color:#333;">25-08-23</div>
<div style="left:66px;top:670px;width:1px;height:27px;background:#e6ede6"></div>
<div style="left:138px;top:670px;width:101px;height:27px;background:#efefef"></div>
<div class="c" style="left:137px;top:671px;width:101px;height:27px;line-height:27px;color:#000;">卡尔斯鲁厄</div>
<div style="left:137px;top:669px;width:1px;height:28px;background:#bbbbbb"></div>
<div style="left:240px;top:670px;width:82px;height:27px;background:#efefef"></div>
<div class="c" style="left:240px;top:671px;width:82px;height:27px;line-height:27px;letter-spacing:0.3px;text-indent:0.3px;color:#333;"><span style="color:#ff0000">2-0</span>(1-0)</div>
<div style="left:239px;top:669px;width:1px;height:28px;background:#bbbbbb"></div>
<div style="left:323px;top:670px;width:36px;height:27px;background:#efefef"></div>
<div class="c" style="left:323px;top:671px;width:36px;height:27px;line-height:27px;letter-spacing:0.3px;text-indent:0.3px;color:#333;">5-2</div>
<div style="left:322px;top:669px;width:1px;height:28px;background:#bbbbbb"></div>
<div style="left:360px;top:670px;width:95px;height:27px;background:#efefef"></div>
<div class="c" style="left:359px;top:671px;width:95px;height:27px;line-height:27px;color:#000;"><span style="color:#007000">布轮斯维克</span><span class="rc">1</span></div>
<div style="left:359px;top:669px;width:1px;height:28px;background:#bbbbbb"></div>
<div style="left:456px;top:670px;width:37px;height:27px;background:#fdf9f6"></div>
<div class="c" style="left:456px;top:671px;width:37px;height:27px;line-height:27px;letter-spacing:0.3px;text-indent:0.3px;color:#333;">1.06</div>
<div style="left:455px;top:669px;width:1px;height:28px;background:#bbbbbb"></div>
<div style="left:494px;top:670px;width:68px;height:27px;background:#fdf9f6"></div>
<div class="c" style="left:493px;top:671px;width:68px;height:27px;line-height:27px;color:#000;">半/一</div>
<div style="left:493px;top:669px;width:1px;height:28px;background:#bbbbbb"></div>
<div style="left:563px;top:670px;width:37px;height:27px;background:#fdf9f6"></div>
<div class="c" style="left:563px;top:671px;width:37px;height:27px;line-height:27px;letter-spacing:0.3px;text-indent:0.3px;color:#333;">0.83</div>
<div style="left:562px;top:669px;width:1px;height:28px;background:#bbbbbb"></div>
<div style="left:601px;top:670px;width:57px;height:27px;background:#eef6fb"></div>
<div class="c" style="left:601px;top:671px;width:57px;height:27px;line-height:27px;letter-spacing:0.3px;text-indent:0.3px;color:#333;">1.79</div>
<div style="left:600px;top:669px;width:1px;height:28px;background:#bbbbbb"></div>
<div style="left:659px;top:670px;width:59px;height:27px;background:#eef6fb"></div>
<div class="c" style="left:659px;top:671px;width:59px;height:27px;line-height:27px;letter-spacing:0.3px;text-indent:0.3px;color:#333;">3.87</div>
<div style="left:658px;top:669px;width:1px;height:28px;background:#bbbbbb"></div>
<div style="left:719px;top:670px;width:59px;height:27px;background:#eef6fb"></div>
<div class="c" style="left:719px;top:671px;width:59px;height:27px;line-height:27px;letter-spacing:0.3px;text-indent:0.3px;color:#333;">3.95</div>
<div style="left:718px;top:669px;width:1px;height:28px;background:#bbbbbb"></div>
<div style="left:779px;top:670px;width:36px;height:27px;background:#efefef"></div>
<div class="c" style="left:778px;top:671px;width:36px;height:27px;line-height:27px;color:#000;"><span style="color:#008000">負</span></div>
<div style="left:778px;top:669px;width:1px;height:28px;background:#bbbbbb"></div>
<div style="left:816px;top:670px;width:36px;height:27px;background:#efefef"></div>
<div class="c" style="left:815px;top:671px;width:36px;height:27px;line-height:27px;color:#000;"><span style="color:#008000">輸</span></div>
<div style="left:815px;top:669px;width:1px;height:28px;background:#bbbbbb"></div>
<div style="left:853px;top:670px;width:52px;height:27px;background:#efefef"></div>
<div class="c" style="left:852px;top:671px;width:52px;height:27px;line-height:27px;color:#000;"><span style="color:#008000">小</span></div>
<div style="left:852px;top:669px;width:1px;height:28px;background:#bbbbbb"></div>
<div style="left:0px;top:697px;width:904px;height:1px;background:#bbbbbb"></div>
<div style="left:0px;top:698px;width:66px;height:27px;background:#cc00cc"></div>
<div class="c" style="left:-1px;top:699px;width:66px;height:27px;line-height:27px;color:#000;color:#fff">德乙</div>
<div style="left:67px;top:698px;width:70px;height:27px;background:#ffffff"></div>
<div class="c" style="left:67px;top:699px;width:70px;height:27px;line-height:27px;letter-spacing:0.3px;text-indent:0.3px;color:#333;">25-08-09</div>
<div style="left:66px;top:698px;width:1px;height:27px;background:#e6ede6"></div>
<div style="left:138px;top:698px;width:101px;height:27px;background:#ffffff"></div>
<div class="c" style="left:137px;top:699px;width:101px;height:27px;line-height:27px;color:#000;"><span style="color:#007000">布轮斯维克</span></div>
<div style="left:137px;top:697px;width:1px;height:28px;background:#bbbbbb"></div>
<div style="left:240px;top:698px;width:82px;height:27px;background:#ffffff"></div>
<div class="c" style="left:240px;top:699px;width:82px;height:27px;line-height:27px;letter-spacing:0.3px;text-indent:0.3px;color:#333;"><span style="color:#ff0000">3-2</span>(2-1)</div>
<div style="left:239px;top:697px;width:1px;height:28px;background:#bbbbbb"></div>
<div style="left:323px;top:698px;width:36px;height:27px;background:#ffffff"></div>
<div class="c" style="left:323px;top:699px;width:36px;height:27px;line-height:27px;letter-spacing:0.3px;text-indent:0.3px;color:#333;">3-9</div>
<div style="left:322px;top:697px;width:1px;height:28px;background:#bbbbbb"></div>
<div style="left:360px;top:698px;width:95px;height:27px;background:#ffffff"></div>
<div class="c" style="left:359px;top:699px;width:95px;height:27px;line-height:27px;color:#000;">菲尔特</div>
<div style="left:359px;top:697px;width:1px;height:28px;background:#bbbbbb"></div>
<div style="left:456px;top:698px;width:37px;height:27px;background:#fdf9f6"></div>
<div class="c" style="left:456px;top:699px;width:37px;height:27px;line-height:27px;letter-spacing:0.3px;text-indent:0.3px;color:#333;">0.78</div>
<div style="left:455px;top:697px;width:1px;height:28px;background:#bbbbbb"></div>
<div style="left:494px;top:698px;width:68px;height:27px;background:#fdf9f6"></div>
<div class="c" style="left:493px;top:699px;width:68px;height:27px;line-height:27px;color:#000;">平手</div>
<div style="left:493px;top:697px;width:1px;height:28px;background:#bbbbbb"></div>
<div style="left:563px;top:698px;width:37px;height:27px;background:#fdf9f6"></div>
<div class="c" style="left:563px;top:699px;width:37px;height:27px;line-height:27px;letter-spacing:0.3px;text-indent:0.3px;color:#333;">1.12</div>
<div style="left:562px;top:697px;width:1px;height:28px;background:#bbbbbb"></div>
<div style="left:601px;top:698px;width:57px;height:27px;background:#eef6fb"></div>
<div class="c" style="left:601px;top:699px;width:57px;height:27px;line-height:27px;letter-spacing:0.3px;text-indent:0.3px;color:#333;">2.34</div>
<div style="left:600px;top:697px;width:1px;height:28px;background:#bbbbbb"></div>
<div style="left:659px;top:698px;width:59px;height:27px;background:#eef6fb"></div>
<div class="c" style="left:659px;top:699px;width:59px;height:27px;line-height:27px;letter-spacing:0.3px;text-indent:0.3px;color:#333;">3.41</div>
<div style="left:658px;top:697px;width:1px;height:28px;background:#bbbbbb"></div>
<div style="left:719px;top:698px;width:59px;height:27px;background:#eef6fb"></div>
<div class="c" style="left:719px;top:699px;width:59px;height:27px;line-height:27px;letter-spacing:0.3px;text-indent:0.3px;color:#333;">2.83</div>
<div style="left:718px;top:697px;width:1px;height:28px;background:#bbbbbb"></div>
<div style="left:779px;top:698px;width:36px;height:27px;background:#ffffff"></div>
<div class="c" style="left:778px;top:699px;width:36px;height:27px;line-height:27px;color:#000;"><span style="color:#ff0000">勝</span></div>
<div style="left:778px;top:697px;width:1px;height:28px;background:#bbbbbb"></div>
<div style="left:816px;top:698px;width:36px;height:27px;background:#ffffff"></div>
<div class="c" style="left:815px;top:699px;width:36px;height:27px;line-height:27px;color:#000;"><span style="color:#ff0000">贏</span></div>
<div style="left:815px;top:697px;width:1px;height:28px;background:#bbbbbb"></div>
<div style="left:853px;top:698px;width:52px;height:27px;background:#ffffff"></div>
<div class="c" style="left:852px;top:699px;width:52px;height:27px;line-height:27px;color:#000;"><span style="color:#ff0000">大</span></div>
<div style="left:852px;top:697px;width:1px;height:28px;background:#bbbbbb"></div>
<div style="left:0px;top:725px;width:904px;height:1px;background:#bbbbbb"></div>
<div style="left:0px;top:726px;width:66px;height:27px;background:#cc00cc"></div>
<div class="c" style="left:-1px;top:727px;width:66px;height:27px;line-height:27px;color:#000;color:#fff">德乙</div>
<div style="left:67px;top:726px;width:70px;height:27px;background:#efefef"></div>
<div class="c" style="left:67px;top:727px;width:70px;height:27px;line-height:27px;letter-spacing:0.3px;text-indent:0.3px;color:#333;">25-08-03</div>
<div style="left:66px;top:726px;width:1px;height:27px;background:#e6ede6"></div>
<div style="left:138px;top:726px;width:101px;height:27px;background:#efefef"></div>
<div class="c" style="left:137px;top:727px;width:101px;height:27px;line-height:27px;color:#000;">马格德堡</div>
<div style="left:137px;top:725px;width:1px;height:28px;background:#bbbbbb"></div>
<div style="left:240px;top:726px;width:82px;height:27px;background:#efefef"></div>
<div class="c" style="left:240px;top:727px;width:82px;height:27px;line-height:27px;letter-spacing:0.3px;text-indent:0.3px;color:#333;"><span style="color:#ff0000">0-1</span>(0-0)</div>
<div style="left:239px;top:725px;width:1px;height:28px;background:#bbbbbb"></div>
<div style="left:323px;top:726px;width:36px;height:27px;background:#efefef"></div>
<div class="c" style="left:323px;top:727px;width:36px;height:27px;line-height:27px;letter-spacing:0.3px;text-indent:0.3px;color:#333;">12-2</div>
<div style="left:322px;top:725px;width:1px;height:28px;background:#bbbbbb"></div>
<div style="left:360px;top:726px;width:95px;height:27px;background:#efefef"></div>
<div class="c" style="left:359px;top:727px;width:95px;height:27px;line-height:27px;color:#000;"><span style="color:#007000">布轮斯维克</span><span class="rc">1</span></div>
<div style="left:359px;top:725px;width:1px;height:28px;background:#bbbbbb"></div>
<div style="left:456px;top:726px;width:37px;height:27px;background:#fdf9f6"></div>
<div class="c" style="left:456px;top:727px;width:37px;height:27px;line-height:27px;letter-spacing:0.3px;text-indent:0.3px;color:#333;">0.85</div>
<div style="left:455px;top:725px;width:1px;height:28px;background:#bbbbbb"></div>
<div style="left:494px;top:726px;width:68px;height:27px;background:#fdf9f6"></div>
<div class="c" style="left:493px;top:727px;width:68px;height:27px;line-height:27px;color:#000;">半/一</div>
<div style="left:493px;top:725px;width:1px;height:28px;background:#bbbbbb"></div>
<div style="left:563px;top:726px;width:37px;height:27px;background:#fdf9f6"></div>
<div class="c" style="left:563px;top:727px;width:37px;height:27px;line-height:27px;letter-spacing:0.3px;text-indent:0.3px;color:#333;">1.04</div>
<div style="left:562px;top:725px;width:1px;height:28px;background:#bbbbbb"></div>
<div style="left:601px;top:726px;width:57px;height:27px;background:#eef6fb"></div>
<div class="c" style="left:601px;top:727px;width:57px;height:27px;line-height:27px;letter-spacing:0.3px;text-indent:0.3px;color:#333;">1.67</div>
<div style="left:600px;top:725px;width:1px;height:28px;background:#bbbbbb"></div>
<div style="left:659px;top:726px;width:59px;height:27px;background:#eef6fb"></div>
<div class="c" style="left:659px;top:727px;width:59px;height:27px;line-height:27px;letter-spacing:0.3px;text-indent:0.3px;color:#333;">3.95</div>
<div style="left:658px;top:725px;width:1px;height:28px;background:#bbbbbb"></div>
<div style="left:719px;top:726px;width:59px;height:27px;background:#eef6fb"></div>
<div class="c" style="left:719px;top:727px;width:59px;height:27px;line-height:27px;letter-spacing:0.3px;text-indent:0.3px;color:#333;">4.52</div>
<div style="left:718px;top:725px;width:1px;height:28px;background:#bbbbbb"></div>
<div style="left:779px;top:726px;width:36px;height:27px;background:#efefef"></div>
<div class="c" style="left:778px;top:727px;width:36px;height:27px;line-height:27px;color:#000;"><span style="color:#ff0000">勝</span></div>
<div style="left:778px;top:725px;width:1px;height:28px;background:#bbbbbb"></div>
<div style="left:816px;top:726px;width:36px;height:27px;background:#efefef"></div>
<div class="c" style="left:815px;top:727px;width:36px;height:27px;line-height:27px;color:#000;"><span style="color:#ff0000">贏</span></div>
<div style="left:815px;top:725px;width:1px;height:28px;background:#bbbbbb"></div>
<div style="left:853px;top:726px;width:52px;height:27px;background:#efefef"></div>
<div class="c" style="left:852px;top:727px;width:52px;height:27px;line-height:27px;color:#000;"><span style="color:#008000">小</span></div>
<div style="left:852px;top:725px;width:1px;height:28px;background:#bbbbbb"></div>
<div style="left:0px;top:753px;width:904px;height:1px;background:#bbbbbb"></div>
<div style="left:0px;top:753px;width:66px;height:1px;background:#e6ede6"></div>
<div style="left:0px;top:406px;width:904px;height:1px;background:#bbbbbb"></div>
<div style="left:0px;top:407px;width:904px;height:1px;background:#dce3ec"></div>
</body></html>
